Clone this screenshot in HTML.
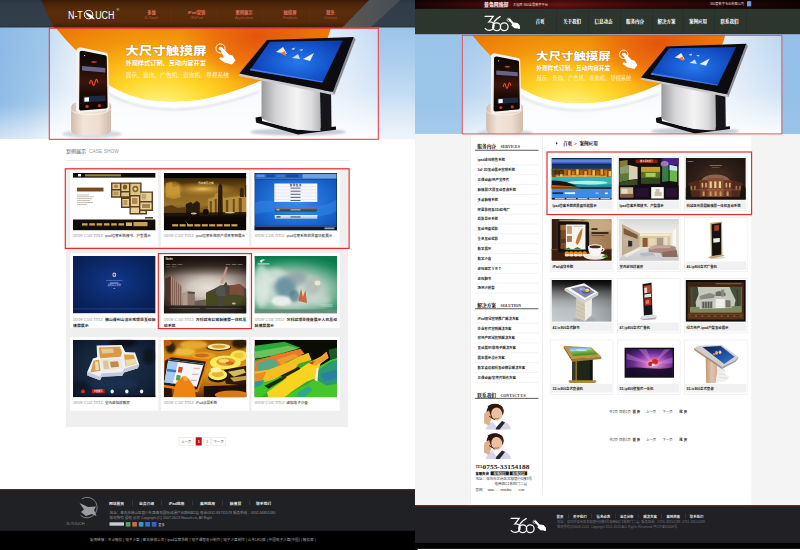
<!DOCTYPE html>
<html lang="zh-CN"><head><meta charset="utf-8"><title>N-Touch / 360 案例展示</title>
<style>
html,body{margin:0;padding:0;width:800px;height:550px;overflow:hidden;background:#fff}
svg{display:block;position:absolute;left:0;top:0}
text{white-space:pre}
</style></head><body>
<svg width="800" height="550" viewBox="0 0 800 550">
<defs>
<filter id="b1" x="-20%" y="-20%" width="140%" height="140%"><feGaussianBlur stdDeviation="1"/></filter>
<filter id="b2" x="-20%" y="-20%" width="140%" height="140%"><feGaussianBlur stdDeviation="2"/></filter>
<filter id="b3" x="-30%" y="-30%" width="160%" height="160%"><feGaussianBlur stdDeviation="3.5"/></filter>
<filter id="b5" x="-30%" y="-30%" width="160%" height="160%"><feGaussianBlur stdDeviation="6"/></filter>
<filter id="bh" x="-20%" y="-20%" width="140%" height="140%"><feGaussianBlur stdDeviation="0.5"/></filter>
<linearGradient id="bnL" x1="0" y1="0" x2="0" y2="1" gradientUnits="objectBoundingBox"><stop offset="0" stop-color="#b4d2ef"/><stop offset="1" stop-color="#e6eff9"/></linearGradient>
<linearGradient id="bnLh" x1="0" y1="0" x2="1" y2="0" gradientUnits="objectBoundingBox"><stop offset="0" stop-color="#b9d5f0" stop-opacity="1"/><stop offset="1" stop-color="#c9def3" stop-opacity="0"/></linearGradient>
<linearGradient id="bnRh" x1="0" y1="0" x2="1" y2="0" gradientUnits="objectBoundingBox"><stop offset="0" stop-color="#bcd6f1" stop-opacity="0"/><stop offset="1" stop-color="#bcd6f1" stop-opacity="1"/></linearGradient>
<linearGradient id="bnFade" x1="0" y1="0" x2="0" y2="1" gradientUnits="objectBoundingBox"><stop offset="0" stop-color="#ffffff" stop-opacity="0"/><stop offset="0.55" stop-color="#ffffff" stop-opacity="0.3"/><stop offset="1" stop-color="#ffffff" stop-opacity="1"/></linearGradient>
<radialGradient id="blobG" cx="160" cy="117" r="108" gradientUnits="userSpaceOnUse" gradientTransform="translate(160 117) scale(1.45 1) translate(-160 -117)"><stop offset="0" stop-color="#fff6b0"/><stop offset="0.2" stop-color="#ffea62"/><stop offset="0.38" stop-color="#ffd528"/><stop offset="0.55" stop-color="#fcb816"/><stop offset="0.72" stop-color="#f4960c"/><stop offset="1" stop-color="#ec7a06"/></radialGradient>
<radialGradient id="blobRed" cx="258" cy="36" r="60" gradientUnits="userSpaceOnUse" gradientTransform="translate(258 36) scale(1.3 0.8) translate(-258 -36)"><stop offset="0" stop-color="#e4520e" stop-opacity="0.95"/><stop offset="0.55" stop-color="#e8600c" stop-opacity="0.6"/><stop offset="1" stop-color="#ec6c0c" stop-opacity="0"/></radialGradient>
<linearGradient id="standG" x1="0" y1="0" x2="1" y2="0" gradientUnits="objectBoundingBox"><stop offset="0" stop-color="#d2bcac"/><stop offset="0.3" stop-color="#f2e4d8"/><stop offset="0.7" stop-color="#eedccf"/><stop offset="1" stop-color="#d0baaa"/></linearGradient>
<linearGradient id="kbodyG" x1="0" y1="0" x2="1" y2="0" gradientUnits="objectBoundingBox"><stop offset="0" stop-color="#9a9a9c"/><stop offset="0.25" stop-color="#d4d4d6"/><stop offset="0.6" stop-color="#f4f4f5"/><stop offset="0.85" stop-color="#dcdcde"/><stop offset="1" stop-color="#b4b4b6"/></linearGradient>
<radialGradient id="kscrG" cx="298" cy="62" r="48" gradientUnits="userSpaceOnUse" gradientTransform="translate(298 62) scale(1.3 0.7) translate(-298 -62)"><stop offset="0" stop-color="#2878ea"/><stop offset="0.45" stop-color="#1658d0"/><stop offset="1" stop-color="#0a32a0"/></radialGradient>
<linearGradient id="phoneScr" x1="0" y1="0" x2="0" y2="1" gradientUnits="objectBoundingBox"><stop offset="0" stop-color="#0c0806"/><stop offset="0.3" stop-color="#1e0e0a"/><stop offset="0.52" stop-color="#3c160c"/><stop offset="0.72" stop-color="#1c0a06"/><stop offset="1" stop-color="#0c0605"/></linearGradient>
<clipPath id="blobC"><path d="M55,27 L66,40 L77,51.5 C86,64 96,78 108,85 C113,88 119,91 125,93.75 C133,96.6 141,98.8 150,100.6 C158,101.8 164,102 170,102 C178,102 192,101 200,100 C212,97.6 222,95.6 230,93.75 C238,91.6 245,88 250,85.6 L260,81 L300,72 C318,58 328,42 331,27 Z"/></clipPath>
<g id="bn"><rect x="40" y="27" width="352" height="113" fill="#f3f7fc"/><rect x="40" y="27" width="60" height="113" fill="url(#bnLh)"/><rect x="300" y="27" width="92" height="113" fill="url(#bnRh)"/><rect x="40" y="27" width="352" height="113" fill="url(#bnFade)"/><g clip-path="url(#blobC)"><rect x="40" y="27" width="352" height="113" fill="url(#blobG)"/><rect x="40" y="27" width="352" height="113" fill="url(#blobRed)"/></g><path d="M108,85 C120,92 135,98 150,100.6 C165,102.6 185,102 200,100 C220,96 240,90 260,81 L262,88 C245,97 222,104 200,107 C180,109 160,109 145,107 C130,104 115,97 108,91 Z" fill="#ffffff" opacity="0.95"/><path d="M106,92 C120,102 145,108.6 170,109.4 C195,110 225,104 258,92" fill="none" stroke="#b8c4d4" stroke-width="1.6" opacity="0.55" filter="url(#b1)"/><ellipse cx="92" cy="134" rx="30" ry="4" fill="#b9c2cf" opacity="0.6" filter="url(#b1)"/><path d="M71.2,108 C71.2,104 74,102.6 78,102.6 L106,102 C109.6,102 111,103.6 111,106.6 L111,129 C111,134 106,135.6 91,135.6 C76,135.6 71.2,134 71.2,129 Z" fill="url(#standG)"/><path d="M81,47.5 L105.4,52.4 C107.2,52.8 108,53.8 108,55.6 L109.4,107.4 C109.4,109.4 108.4,110.4 106.6,110.6 L79.4,113 C77.4,113.1 76.2,112 76.1,110 L76.4,50.6 C76.4,48.4 78.4,47 81,47.5 Z" fill="#f6f3ee"/><path d="M82.6,50.8 L105,55.2 C106.2,55.4 106.8,56.2 106.8,57.4 L107.6,106.4 C107.6,107.6 107,108.3 105.8,108.4 L81.2,110.6 C79.8,110.7 79.1,110 79.1,108.6 L79.6,53 C79.6,51.4 80.8,50.5 82.6,50.8 Z" fill="url(#phoneScr)"/><path d="M82,66 L105.4,68 L105.4,72.4 L82,70.6 Z" fill="#8a86c0" opacity="0.7"/><path d="M83.2,96.4 L105.4,95.4 L105.5,101 L83.2,102.4 Z" fill="#1e2a44"/><path d="M84.4,97.4 L89,97.2 L89,101.4 L84.4,101.7 Z" fill="#fff"/><path d="M89.6,84 q1.2,-7 2.8,-1 q1.4,5.4 2.8,-1 q1.4,-5.6 2.6,0.6" fill="none" stroke="#ff4a28" stroke-width="1.1"/><ellipse cx="94" cy="62" rx="3" ry="0.8" fill="#e8502a"/><circle cx="84.6" cy="55.6" r="0.7" fill="#e8d8c8"/><circle cx="87" cy="106.4" r="1.7" fill="#b04418"/><circle cx="99.4" cy="105.6" r="1.7" fill="#b04418"/><path d="M71.2,110 C74,113.6 82,114.6 91,114.4 C100,114.2 108,112.6 111,108.6 L111,129 C111,134 106,135.6 91,135.6 C76,135.6 71.2,134 71.2,129 Z" fill="url(#standG)"/><path d="M71.2,110 C74,113.6 82,114.6 91,114.4 C100,114.2 108,112.6 111,108.6" fill="none" stroke="#fff8f0" stroke-width="0.8" opacity="0.9"/><ellipse cx="298" cy="132" rx="48" ry="3.6" fill="#8d97a8" opacity="0.5" filter="url(#b1)"/><path d="M255.5,117.6 L262,116.4 L262,121 L298,130 L336,126.6 L336,129.8 L298,134.6 L256,122.6 Z" fill="#0e0e12"/><path d="M320,90 L331,88 L331.5,128.4 L320.5,131 Z" fill="#15151a"/><path d="M261.5,78 L320,91.5 L320.5,131 C300,131.6 278,126.6 261.5,118.6 Z" fill="url(#kbodyG)"/><path d="M239.3,73.6 L333,92 L334.2,95.2 L239,76 Z" fill="#c9c9cf"/><path d="M353.8,37 L355.5,39.5 L334.2,95.2 L333,92 Z" fill="#8a8a92"/><path d="M267,40 L353.8,37 L333,92 L239.3,73.6 Z" fill="#0c0c10"/><path d="M269.7,41.8 L342.8,40.6 L322.5,82.4 L249.8,70.3 Z" fill="url(#kscrG)"/><path d="M276,52 l7,-5 l4,7 z" fill="#fff" opacity="0.9"/><path d="M280,53 l5,-2 l1,5 z" fill="#e8802a"/><path d="M292,58 l6,-4 l2,5 z" fill="#e8f4ff" opacity="0.85"/><path d="M303,59 l11,-6 l-4,8 z" fill="#fff" opacity="0.9"/><path d="M291,49 l4,-1.5 l-1,2.5 z M299,50 l4,-1 l-1,2 z" fill="#fff" opacity="0.8"/><path d="M250.6,68.6 L322.9,81.6 L322.5,82.4 L249.8,70.3 Z" fill="#5a8ae8" opacity="0.8"/><circle cx="220.5" cy="48.5" r="4.6" fill="none" stroke="#fff" stroke-width="1"/><circle cx="220.5" cy="48.5" r="1.8" fill="#fff"/><path d="M219.5,48 L222,47.2 L229,54.5 L232.5,55.5 L235.5,60.5 L232,64.5 L224.5,62.5 L219,58.8 L220.5,57.2 L224,57.8 Z" fill="#fff"/></g>
<linearGradient id="Lblue" x1="0" y1="0" x2="0" y2="1" gradientUnits="objectBoundingBox"><stop offset="0" stop-color="#9bc4e9"/><stop offset="0.6" stop-color="#a6cbed"/><stop offset="1" stop-color="#d3e4f5"/></linearGradient>
<linearGradient id="Lbrown" x1="0" y1="0" x2="0" y2="1" gradientUnits="objectBoundingBox"><stop offset="0" stop-color="#3a1a05"/><stop offset="0.12" stop-color="#4a2408"/><stop offset="0.4" stop-color="#5a2d0b"/><stop offset="0.8" stop-color="#562a0a"/><stop offset="1" stop-color="#3e1e07"/></linearGradient>
<linearGradient id="LblueH" x1="0" y1="0" x2="1" y2="0" gradientUnits="objectBoundingBox"><stop offset="0" stop-color="#86b6e4" stop-opacity="0.75"/><stop offset="0.6" stop-color="#8fbce6" stop-opacity="0.45"/><stop offset="1" stop-color="#a0c6ea" stop-opacity="0"/></linearGradient>
<linearGradient id="LblueV" x1="0" y1="0" x2="0" y2="1" gradientUnits="objectBoundingBox"><stop offset="0" stop-color="#fff" stop-opacity="0"/><stop offset="0.7" stop-color="#fff" stop-opacity="0"/><stop offset="1" stop-color="#fff" stop-opacity="0.55"/></linearGradient>
<linearGradient id="LblueR" x1="0" y1="0" x2="0" y2="1" gradientUnits="objectBoundingBox"><stop offset="0" stop-color="#fff" stop-opacity="0"/><stop offset="0.3" stop-color="#fff" stop-opacity="0.12"/><stop offset="1" stop-color="#fff" stop-opacity="0.62"/></linearGradient>
<linearGradient id="Lhdr" x1="0" y1="0" x2="0" y2="1" gradientUnits="objectBoundingBox"><stop offset="0" stop-color="#2a3541"/><stop offset="0.15" stop-color="#313d49"/><stop offset="0.9" stop-color="#323e4a"/><stop offset="1" stop-color="#2a3440"/></linearGradient>
<linearGradient id="Lband" x1="0" y1="0" x2="1" y2="0" gradientUnits="objectBoundingBox"><stop offset="0" stop-color="#5e5751"/><stop offset="1" stop-color="#444e58"/></linearGradient>
<clipPath id="LbC"><rect x="49" y="28" width="329.5" height="111.5"/></clipPath>
<clipPath id="tLc"><rect x="0" y="0" width="82.6" height="57.4"/></clipPath>
<linearGradient id="l2sky" x1="0" y1="0" x2="0" y2="1" gradientUnits="objectBoundingBox"><stop offset="0" stop-color="#060403"/><stop offset="0.082" stop-color="#060403"/><stop offset="0.09" stop-color="#3a2408"/><stop offset="0.25" stop-color="#6c4a14"/><stop offset="0.38" stop-color="#8e6822"/><stop offset="0.55" stop-color="#9a7228"/><stop offset="0.7" stop-color="#6a4a18"/><stop offset="0.755" stop-color="#1a1208"/><stop offset="0.77" stop-color="#0a0705"/><stop offset="1" stop-color="#0a0705"/></linearGradient>
<radialGradient id="l2glow" cx="0.47" cy="0.3" r="0.3" gradientUnits="objectBoundingBox" gradientTransform="translate(.47 .3) scale(1.4 0.6) translate(-.47 -.3)"><stop offset="0" stop-color="#f0c860" stop-opacity="0.95"/><stop offset="0.5" stop-color="#d09a38" stop-opacity="0.5"/><stop offset="1" stop-color="#c89838" stop-opacity="0"/></radialGradient>
<radialGradient id="l3bg" cx="0.5" cy="0.5" r="0.75" gradientUnits="objectBoundingBox"><stop offset="0" stop-color="#3a8eea"/><stop offset="0.55" stop-color="#1a68d0"/><stop offset="1" stop-color="#0c46a4"/></radialGradient>
<radialGradient id="l4bg" cx="0.5" cy="0.45" r="0.75" gradientUnits="objectBoundingBox"><stop offset="0" stop-color="#12388a"/><stop offset="0.5" stop-color="#0b2868"/><stop offset="1" stop-color="#08194a"/></radialGradient>
<radialGradient id="l5sky" cx="0.54" cy="0.56" r="0.62" gradientUnits="objectBoundingBox" gradientTransform="translate(.54 .56) scale(1.25 0.85) translate(-.54 -.56)"><stop offset="0" stop-color="#e8e0d8"/><stop offset="0.3" stop-color="#d0c6bc"/><stop offset="0.6" stop-color="#8c7c72"/><stop offset="0.85" stop-color="#4a3c34"/><stop offset="1" stop-color="#2a201c"/></radialGradient>
<linearGradient id="l5top" x1="0" y1="0" x2="0" y2="1" gradientUnits="objectBoundingBox"><stop offset="0" stop-color="#120e0c" stop-opacity="0.95"/><stop offset="0.5" stop-color="#241c18" stop-opacity="0.75"/><stop offset="1" stop-color="#3a2e28" stop-opacity="0"/></linearGradient>
<radialGradient id="l5vig" cx="0.5" cy="0.5" r="0.72" gradientUnits="objectBoundingBox"><stop offset="0" stop-color="#000" stop-opacity="0"/><stop offset="0.7" stop-color="#000" stop-opacity="0"/><stop offset="1" stop-color="#1a0c08" stop-opacity="0.7"/></radialGradient>
<radialGradient id="l6bg" cx="0.45" cy="0.6" r="0.72" gradientUnits="objectBoundingBox" gradientTransform="translate(.45 .6) scale(1.2 0.86) translate(-.45 -.6)"><stop offset="0" stop-color="#d6e2da"/><stop offset="0.42" stop-color="#bcd2c6"/><stop offset="0.66" stop-color="#62aa8a"/><stop offset="0.86" stop-color="#1c8a5c"/><stop offset="1" stop-color="#0e7a4c"/></radialGradient>
<radialGradient id="l7bg" cx="0.5" cy="0.5" r="0.75" gradientUnits="objectBoundingBox"><stop offset="0" stop-color="#1e3450"/><stop offset="0.6" stop-color="#14243a"/><stop offset="1" stop-color="#0c1626"/></radialGradient>
<linearGradient id="l8bg" x1="0" y1="0" x2="0" y2="1" gradientUnits="objectBoundingBox"><stop offset="0" stop-color="#8a4a0c"/><stop offset="0.2" stop-color="#d08414"/><stop offset="0.55" stop-color="#e09818"/><stop offset="0.8" stop-color="#b06a10"/><stop offset="1" stop-color="#5a2c08"/></linearGradient>
<linearGradient id="Rblue" x1="0" y1="0" x2="0" y2="1" gradientUnits="objectBoundingBox"><stop offset="0" stop-color="#9bc4ea"/><stop offset="0.7" stop-color="#9cc5ea"/><stop offset="1" stop-color="#a6caec"/></linearGradient>
<linearGradient id="Rtop" x1="0" y1="0" x2="1" y2="0" gradientUnits="objectBoundingBox"><stop offset="0" stop-color="#1a0404"/><stop offset="0.2" stop-color="#4a0c0c"/><stop offset="0.38" stop-color="#6a1212"/><stop offset="0.6" stop-color="#3c0808"/><stop offset="1" stop-color="#120303"/></linearGradient>
<linearGradient id="RtopV" x1="0" y1="0" x2="0" y2="1" gradientUnits="objectBoundingBox"><stop offset="0" stop-color="#000" stop-opacity="0.45"/><stop offset="0.5" stop-color="#000" stop-opacity="0"/><stop offset="1" stop-color="#000" stop-opacity="0.35"/></linearGradient>
<clipPath id="RbC"><rect x="462" y="35" width="320" height="99.3"/></clipPath>
<linearGradient id="RbnL" x1="0" y1="0" x2="0" y2="1" gradientUnits="objectBoundingBox"><stop offset="0" stop-color="#9cc4ea" stop-opacity="0.8"/><stop offset="0.6" stop-color="#a4c9ec" stop-opacity="0.55"/><stop offset="1" stop-color="#b4d2ef" stop-opacity="0.25"/></linearGradient>
<clipPath id="tRc"><rect x="0" y="0" width="60.2" height="41.8"/></clipPath>
<linearGradient id="r1sky" x1="0" y1="0" x2="0" y2="1" gradientUnits="objectBoundingBox"><stop offset="0" stop-color="#10285e"/><stop offset="0.5" stop-color="#163468"/><stop offset="1" stop-color="#2a3c5c"/></linearGradient>
<radialGradient id="r3bg" cx="0.5" cy="0.5" r="0.7" gradientUnits="objectBoundingBox"><stop offset="0" stop-color="#4e3220"/><stop offset="0.5" stop-color="#2e1e18"/><stop offset="1" stop-color="#1c120e"/></radialGradient>
<linearGradient id="r4bg" x1="0" y1="0" x2="1" y2="0" gradientUnits="objectBoundingBox"><stop offset="0" stop-color="#2c1a10"/><stop offset="0.35" stop-color="#5a3c24"/><stop offset="0.6" stop-color="#b08c64"/><stop offset="1" stop-color="#a07850"/></linearGradient>
<linearGradient id="r5c" x1="0" y1="0" x2="0" y2="1" gradientUnits="objectBoundingBox"><stop offset="0" stop-color="#d4d6da"/><stop offset="1" stop-color="#f2f0ec"/></linearGradient>
<linearGradient id="r5f" x1="0" y1="0" x2="0" y2="1" gradientUnits="objectBoundingBox"><stop offset="0" stop-color="#e4e0d8"/><stop offset="1" stop-color="#c8c8cc"/></linearGradient>
<linearGradient id="r7bg" x1="0" y1="0" x2="0" y2="1" gradientUnits="objectBoundingBox"><stop offset="0" stop-color="#050505"/><stop offset="0.1" stop-color="#1a1a1a"/><stop offset="0.3" stop-color="#6c6c6c"/><stop offset="0.5" stop-color="#a2a6a8"/><stop offset="0.7" stop-color="#bac0c4"/><stop offset="1" stop-color="#c4cacd"/></linearGradient>
<linearGradient id="r7bgh" x1="0" y1="0" x2="1" y2="0" gradientUnits="objectBoundingBox"><stop offset="0" stop-color="#fff" stop-opacity="0.06"/><stop offset="0.5" stop-color="#000" stop-opacity="0"/><stop offset="1" stop-color="#000" stop-opacity="0.22"/></linearGradient>
<linearGradient id="r10s" x1="0" y1="0" x2="0.25" y2="1" gradientUnits="objectBoundingBox"><stop offset="0" stop-color="#4a8ee0"/><stop offset="0.4" stop-color="#a8d4f4"/><stop offset="0.55" stop-color="#7abc48"/><stop offset="1" stop-color="#3a8a24"/></linearGradient>
<radialGradient id="r11s" cx="0.58" cy="0.55" r="0.7" gradientUnits="objectBoundingBox"><stop offset="0" stop-color="#f4c8e8"/><stop offset="0.25" stop-color="#c86ac0"/><stop offset="0.6" stop-color="#6a2c94"/><stop offset="1" stop-color="#2c1448"/></radialGradient>
<linearGradient id="r12p" x1="0" y1="0" x2="1" y2="0" gradientUnits="objectBoundingBox"><stop offset="0" stop-color="#c09878"/><stop offset="0.5" stop-color="#e0c4ac"/><stop offset="1" stop-color="#d0b09a"/></linearGradient>
<linearGradient id="r12s" x1="0" y1="0" x2="1" y2="1" gradientUnits="objectBoundingBox"><stop offset="0" stop-color="#0c1c44"/><stop offset="0.5" stop-color="#1c4a9c"/><stop offset="1" stop-color="#3a7ad0"/></linearGradient>
</defs>
<rect x="0" y="0" width="415" height="550" fill="#ffffff" />
<rect x="0" y="27" width="415" height="111.6" fill="url(#Lblue)" />
<rect x="0" y="27" width="49" height="111.6" fill="url(#LblueH)" />
<rect x="0" y="27" width="49" height="111.6" fill="url(#LblueV)" />
<rect x="378" y="27" width="37" height="111.6" fill="url(#LblueR)" />
<rect x="0" y="0" width="415" height="27.5" fill="url(#Lhdr)" />
<path d="M369,0 L400.5,0 L370.5,27.5 L342.3,27.5 Z" fill="url(#Lband)"/>
<path d="M41,0 L369,0 L342.3,27.5 L54.2,27.5 C49,18 44.5,8 41,0 Z" fill="url(#Lbrown)"/>
<g clip-path="url(#LbC)"><use href="#bn"/></g>
<g transform="">
<text transform="translate(125.2 54.9) scale(0.29 0.25)" font-size="46.8" fill="#fff" font-weight="900" font-family='"Liberation Sans","Noto Sans CJK SC",sans-serif' text-anchor="start" style="text-shadow:0 0 1px #b05000" stroke="#c86000" stroke-width="0.6" paint-order="stroke">大尺寸触摸屏</text>
<text transform="translate(125.5 65.3) scale(0.25 0.25)" font-size="24.8" fill="#fff" font-weight="700" font-family='"Liberation Sans","Noto Sans CJK SC",sans-serif' text-anchor="start" stroke="#b86a10" stroke-width="0.5" paint-order="stroke">外观样式订制、互动内容开发</text>
<text transform="translate(125.5 76.6) scale(0.25 0.25)" font-size="23.0" fill="#fff6dc" font-weight="400" font-family='"Liberation Sans","Noto Sans CJK SC",sans-serif' text-anchor="start" opacity="0.92">展示、查询、广告机、查询机、导视系统</text>
</g>
<rect x="49.3" y="28.3" width="329" height="111" fill="none" stroke="#e6343a" stroke-width="1.0"/>
<text transform="translate(68 18.6) scale(0.21 0.25)" font-size="42.4" fill="#fff" font-weight="400" font-family='"Liberation Sans","Noto Sans CJK SC",sans-serif' text-anchor="start" >N-T</text>
<text transform="translate(95.2 18.6) scale(0.21 0.25)" font-size="42.4" fill="#fff" font-weight="400" font-family='"Liberation Sans","Noto Sans CJK SC",sans-serif' text-anchor="start" >UCH</text>
<circle cx="88.6" cy="14.6" r="4.3" fill="none" stroke="#fff" stroke-width="1"/><path d="M85.6,12.2 L91.6,15 L95,19.4 L90.2,18 L86.6,15 Z" fill="#fff"/>
<text transform="translate(116.6 11.4) scale(0.25 0.25)" font-size="15.2" fill="#fff" font-weight="400" font-family='"Liberation Sans","Noto Sans CJK SC",sans-serif' text-anchor="start" >®</text>
<text transform="translate(151.5 14.0) scale(0.25 0.25)" font-size="17.2" fill="#e2705c" font-weight="700" font-family='"Liberation Sans","Noto Sans CJK SC",sans-serif' text-anchor="middle" >多维</text>
<text transform="translate(151.5 19.1) scale(0.25 0.25)" font-size="14.8" fill="#b05a44" font-weight="400" font-family='"Liberation Sans","Noto Sans CJK SC",sans-serif' text-anchor="middle" font-style="italic" >N-Touch</text>
<text transform="translate(196.5 14.0) scale(0.25 0.25)" font-size="17.2" fill="#e2705c" font-weight="700" font-family='"Liberation Sans","Noto Sans CJK SC",sans-serif' text-anchor="middle" >iPad营销</text>
<text transform="translate(196.5 19.1) scale(0.25 0.25)" font-size="14.8" fill="#b05a44" font-weight="400" font-family='"Liberation Sans","Noto Sans CJK SC",sans-serif' text-anchor="middle" font-style="italic" >ISSPad</text>
<text transform="translate(244 14.0) scale(0.25 0.25)" font-size="17.2" fill="#e2705c" font-weight="700" font-family='"Liberation Sans","Noto Sans CJK SC",sans-serif' text-anchor="middle" >案例展示</text>
<text transform="translate(244 19.1) scale(0.25 0.25)" font-size="14.8" fill="#b05a44" font-weight="400" font-family='"Liberation Sans","Noto Sans CJK SC",sans-serif' text-anchor="middle" font-style="italic" >Application</text>
<text transform="translate(290 14.0) scale(0.25 0.25)" font-size="17.2" fill="#e2705c" font-weight="700" font-family='"Liberation Sans","Noto Sans CJK SC",sans-serif' text-anchor="middle" >触摸屏</text>
<text transform="translate(290 19.1) scale(0.25 0.25)" font-size="14.8" fill="#b05a44" font-weight="400" font-family='"Liberation Sans","Noto Sans CJK SC",sans-serif' text-anchor="middle" font-style="italic" >Products</text>
<text transform="translate(330.5 14.0) scale(0.25 0.25)" font-size="17.2" fill="#e2705c" font-weight="700" font-family='"Liberation Sans","Noto Sans CJK SC",sans-serif' text-anchor="middle" >联系</text>
<text transform="translate(330.5 19.1) scale(0.25 0.25)" font-size="14.8" fill="#b05a44" font-weight="400" font-family='"Liberation Sans","Noto Sans CJK SC",sans-serif' text-anchor="middle" font-style="italic" >Contact</text>
<rect x="171.5" y="7" width="0.5" height="15" fill="#6a3a18" opacity="0.6"/>
<rect x="217" y="7" width="0.5" height="15" fill="#6a3a18" opacity="0.6"/>
<rect x="262" y="7" width="0.5" height="15" fill="#6a3a18" opacity="0.6"/>
<rect x="309.5" y="7" width="0.5" height="15" fill="#6a3a18" opacity="0.6"/>
<text transform="translate(66 153.2) scale(0.25 0.25)" font-size="20" fill="#555" font-weight="400" font-family='"Liberation Sans","Noto Sans CJK SC",sans-serif' text-anchor="start" >案例展示</text>
<text transform="translate(89 153.2) scale(0.25 0.25)" font-size="19.6" fill="#9a9a9a" font-weight="400" font-family='"Liberation Sans","Noto Sans CJK SC",sans-serif' text-anchor="start" >CASE SHOW</text>
<rect x="66" y="160.2" width="283" height="0.6" fill="#dcdcdc" />
<rect x="66" y="167.5" width="282" height="259.5" fill="#efefef" />
<rect x="70.2" y="170.2" width="88" height="76.3" fill="#ffffff" />
<text transform="translate(73 237.4) scale(0.25 0.25)" font-size="14.48" fill="#8e8e8e" font-weight="400" font-family='"Liberation Serif","Noto Serif CJK SC",serif' text-anchor="start" font-style="italic" >SHOW CASE TITLE</text>
<text transform="translate(105 237.4) scale(0.25 0.25)" font-size="14.2" fill="#3a3a3a" font-weight="500" font-family='"Liberation Sans","Noto Sans CJK SC",sans-serif' text-anchor="start" >ipad答案系统楼书、户型展示</text>
<rect x="161.0" y="170.2" width="88" height="76.3" fill="#ffffff" />
<text transform="translate(163.8 237.4) scale(0.25 0.25)" font-size="14.48" fill="#8e8e8e" font-weight="400" font-family='"Liberation Serif","Noto Serif CJK SC",serif' text-anchor="start" font-style="italic" >SHOW CASE TITLE</text>
<text transform="translate(195.8 237.4) scale(0.25 0.25)" font-size="14.2" fill="#3a3a3a" font-weight="500" font-family='"Liberation Sans","Noto Sans CJK SC",sans-serif' text-anchor="start" >ipad答案系统房产项目案例展示</text>
<rect x="251.7" y="170.2" width="88" height="76.3" fill="#ffffff" />
<text transform="translate(254.5 237.4) scale(0.25 0.25)" font-size="14.48" fill="#8e8e8e" font-weight="400" font-family='"Liberation Serif","Noto Serif CJK SC",serif' text-anchor="start" font-style="italic" >SHOW CASE TITLE</text>
<text transform="translate(286.5 237.4) scale(0.25 0.25)" font-size="14.2" fill="#3a3a3a" font-weight="500" font-family='"Liberation Sans","Noto Sans CJK SC",sans-serif' text-anchor="start" >ipad答案系统的界面功能展示</text>
<rect x="70.2" y="253.2" width="88" height="74.8" fill="#ffffff" />
<text transform="translate(73 321.4) scale(0.25 0.25)" font-size="14.48" fill="#8e8e8e" font-weight="400" font-family='"Liberation Serif","Noto Serif CJK SC",serif' text-anchor="start" font-style="italic" >SHOW CASE TITLE</text>
<text transform="translate(105 321.4) scale(0.25 0.25)" font-size="15.6" fill="#2e2e2e" font-weight="700" font-family='"Liberation Sans","Noto Sans CJK SC",sans-serif' text-anchor="start" >佛山保利山清水秀项目互动触</text>
<text transform="translate(73 326.9) scale(0.25 0.25)" font-size="15.6" fill="#2e2e2e" font-weight="700" font-family='"Liberation Sans","Noto Sans CJK SC",sans-serif' text-anchor="start" >摸屏展示</text>
<rect x="161.0" y="253.2" width="88" height="74.8" fill="#ffffff" />
<text transform="translate(163.8 321.4) scale(0.25 0.25)" font-size="14.48" fill="#8e8e8e" font-weight="400" font-family='"Liberation Serif","Noto Serif CJK SC",serif' text-anchor="start" font-style="italic" >SHOW CASE TITLE</text>
<text transform="translate(195.8 321.4) scale(0.25 0.25)" font-size="15.6" fill="#2e2e2e" font-weight="700" font-family='"Liberation Sans","Noto Sans CJK SC",sans-serif' text-anchor="start" >万科城市公寓触摸屏一体机互</text>
<text transform="translate(163.8 326.9) scale(0.25 0.25)" font-size="15.6" fill="#2e2e2e" font-weight="700" font-family='"Liberation Sans","Noto Sans CJK SC",sans-serif' text-anchor="start" >动系统</text>
<rect x="251.7" y="253.2" width="88" height="74.8" fill="#ffffff" />
<text transform="translate(254.5 321.4) scale(0.25 0.25)" font-size="14.48" fill="#8e8e8e" font-weight="400" font-family='"Liberation Serif","Noto Serif CJK SC",serif' text-anchor="start" font-style="italic" >SHOW CASE TITLE</text>
<text transform="translate(286.5 321.4) scale(0.25 0.25)" font-size="15.6" fill="#2e2e2e" font-weight="700" font-family='"Liberation Sans","Noto Sans CJK SC",sans-serif' text-anchor="start" >万科城项目楼盘展示人机互动</text>
<text transform="translate(254.5 326.9) scale(0.25 0.25)" font-size="15.6" fill="#2e2e2e" font-weight="700" font-family='"Liberation Sans","Noto Sans CJK SC",sans-serif' text-anchor="start" >触摸屏展示</text>
<rect x="70.2" y="337.0" width="88" height="73.8" fill="#ffffff" />
<text transform="translate(73 404.2) scale(0.25 0.25)" font-size="14.48" fill="#8e8e8e" font-weight="400" font-family='"Liberation Serif","Noto Serif CJK SC",serif' text-anchor="start" font-style="italic" >SHOW CASE TITLE</text>
<text transform="translate(105 404.2) scale(0.25 0.25)" font-size="14.2" fill="#3a3a3a" font-weight="500" font-family='"Liberation Sans","Noto Sans CJK SC",sans-serif' text-anchor="start" >室内虚拟样板房</text>
<rect x="161.0" y="337.0" width="88" height="73.8" fill="#ffffff" />
<text transform="translate(163.8 404.2) scale(0.25 0.25)" font-size="14.48" fill="#8e8e8e" font-weight="400" font-family='"Liberation Serif","Noto Serif CJK SC",serif' text-anchor="start" font-style="italic" >SHOW CASE TITLE</text>
<text transform="translate(195.8 404.2) scale(0.25 0.25)" font-size="14.2" fill="#3a3a3a" font-weight="500" font-family='"Liberation Sans","Noto Sans CJK SC",sans-serif' text-anchor="start" >iPad点餐系统</text>
<rect x="251.7" y="337.0" width="88" height="73.8" fill="#ffffff" />
<text transform="translate(254.5 404.2) scale(0.25 0.25)" font-size="14.48" fill="#8e8e8e" font-weight="400" font-family='"Liberation Serif","Noto Serif CJK SC",serif' text-anchor="start" font-style="italic" >SHOW CASE TITLE</text>
<text transform="translate(286.5 404.2) scale(0.25 0.25)" font-size="14.2" fill="#3a3a3a" font-weight="500" font-family='"Liberation Sans","Noto Sans CJK SC",sans-serif' text-anchor="start" >虚拟电子沙盘</text>
<g transform="translate(73 173)" clip-path="url(#tLc)">
<rect x="0" y="0" width="82.6" height="57.4" fill="#ffffff" />
<rect x="0" y="0" width="82.6" height="4.6" fill="#120c08" />
<rect x="5" y="1" width="3" height="2.4" fill="#f8f8f0" />
<rect x="12" y="1.2" width="36" height="2.2" fill="#a07c3a" />
<rect x="0" y="46.5" width="82.6" height="10.9" fill="#130d08" />
<rect x="9.0" y="50.2" width="5.6" height="2.4" fill="#c9a04c" />
<rect x="16.3" y="50.2" width="5.6" height="2.4" fill="#c9a04c" />
<rect x="23.6" y="50.2" width="5.6" height="2.4" fill="#c9a04c" />
<rect x="30.9" y="50.2" width="5.6" height="2.4" fill="#c9a04c" />
<rect x="38.2" y="50.2" width="5.6" height="2.4" fill="#c9a04c" />
<rect x="45.5" y="50.2" width="5.6" height="2.4" fill="#c9a04c" />
<rect x="53" y="49.4" width="6" height="3.6" fill="#d8b45c" />
<rect x="60.5" y="49" width="14" height="4.2" fill="#c9a04c" />
<rect x="4" y="14.6" width="26.5" height="3.9" fill="#7a4a1c" />
<rect x="4" y="21.5" width="12" height="0.8" fill="#b8b0a4" />
<rect x="4" y="23.4" width="17" height="0.8" fill="#b8b0a4" />
<rect x="4" y="25.3" width="15" height="0.8" fill="#b8b0a4" />
<rect x="4" y="27.2" width="13" height="0.8" fill="#b8b0a4" />
<rect x="4" y="29.1" width="16" height="0.8" fill="#b8b0a4" />
<rect x="4" y="31.0" width="10" height="0.8" fill="#b8b0a4" />
<path d="M38,9.4 L68.6,9.4 L68.6,18.4 L80,18.4 L80,38 L74,38 L74,41.4 L56.5,41.4 L56.5,35 L48,35 L48,24.7 L38,24.7 Z" fill="#5c3e1c" />
<path d="M39.4,10.8 L47,10.8 L47,16 L39.4,16 Z M48.4,10.8 L56,10.8 L56,18 L48.4,18 Z M57.4,10.8 L67.2,10.8 L67.2,22 L57.4,22 Z M39.4,17.4 L47,17.4 L47,23.3 L39.4,23.3 Z M48.4,19.4 L56,19.4 L56,23.3 L48.4,23.3 Z" fill="#dcc48c" />
<path d="M49.4,26 L56,26 L56,33.6 L49.4,33.6 Z M57.8,23.4 L66,23.4 L66,33 L57.8,33 Z M57.8,34.4 L66,34.4 L66,40 L57.8,40 Z M67.4,19.8 L78.6,19.8 L78.6,28 L67.4,28 Z M67.4,29.4 L78.6,29.4 L78.6,36.6 L67.4,36.6 Z M67.4,38 L72.6,38 L72.6,40 L67.4,40 Z" fill="#e6d09c" />
<ellipse cx="62.4" cy="16" rx="3" ry="3.2" fill="#8a6428" />
<ellipse cx="62.4" cy="16" rx="1.4" ry="1.5" fill="#e8d8a8" />
<ellipse cx="52" cy="14" rx="2.2" ry="2.6" fill="#7a5624" />
<ellipse cx="43" cy="13.2" rx="2" ry="1.6" fill="#a88444" />
<rect x="59" y="25" width="5.4" height="6" fill="#b08a4c" />
<rect x="68.6" y="21" width="4.6" height="5.4" fill="#c8a868" />
<rect x="69" y="31" width="8" height="4" fill="#a8844c" />
<rect x="50.4" y="27" width="4" height="5" fill="#c09858" />
<rect x="40.4" y="18.6" width="5" height="3.6" fill="#b89454" />
<rect x="72" y="44" width="8" height="1.6" fill="#6a4418" />
</g>
<g transform="translate(163.8 173)" clip-path="url(#tLc)">
<rect x="0" y="0" width="82.6" height="57.4" fill="url(#l2sky)" />
<rect x="0" y="4.6" width="82.6" height="38" fill="url(#l2glow)" />
<ellipse cx="9" cy="16" rx="9" ry="7" fill="#c09030" opacity="0.75" filter="url(#b1)"/>
<path d="M2,10 L8,9 L9,14 L15,13 L17,24 L10,26 L2,24 Z" fill="#d8a840" opacity="0.55"/>
<path d="M44,26 L50,24 L52,20 L58,20 L60,25 L82.6,22 L82.6,41 L44,42 Z" fill="#b48c3c" />
<path d="M46,28 L48,28 L48,41 L46,41 Z M51,26 L53,26 L53,41 L51,41 Z M62,27 L64.5,27 L64.5,41 L62,41 Z M69,26 L71,26 L71,41 L69,41 Z M75,25 L78,25 L78,41 L75,41 Z" fill="#5a3c12" opacity="0.8"/>
<path d="M54.5,13 L56.5,10 L58.5,13 L59,42 L54,42 Z" fill="#2c1c08" />
<path d="M76,16 L78,14 L80,16 L80,24 L76,24 Z M81,12 L82.6,12 L82.6,24 L81,24 Z" fill="#3a2610" />
<path d="M22,31 L27,29 L29,31 L33,28 L36,30 L36,43 L22,43 Z" fill="#2a1a08" />
<path d="M0,34 L8,32 L14,35 L22,34 L22,43 L0,43 Z" fill="#5a3c14" />
<path d="M36,36 L44,33 L44,43 L36,43 Z" fill="#7a5a20" />
<ellipse cx="42" cy="39" rx="3" ry="3" fill="#140c04" />
<path d="M0,40 L82.6,39 L82.6,44 L0,44 Z" fill="#140c06" opacity="0.85"/>
<ellipse cx="30" cy="40.5" rx="3" ry="1" fill="#f0e8d0" opacity="0.8"/>
<ellipse cx="66" cy="39.6" rx="5" ry="0.9" fill="#f0e0b0" opacity="0.8"/>
<rect x="8.4" y="51.2" width="6" height="2.2" fill="#d0a848" />
<rect x="15.8" y="51.2" width="6" height="2.2" fill="#d0a848" />
<rect x="23.200000000000003" y="51.2" width="6" height="2.2" fill="#d0a848" />
<rect x="30.6" y="51.2" width="6" height="2.2" fill="#d0a848" />
<rect x="38.0" y="51.2" width="6" height="2.2" fill="#d0a848" />
<rect x="45.4" y="51.2" width="6" height="2.2" fill="#d0a848" />
<rect x="52.800000000000004" y="51.2" width="6" height="2.2" fill="#d0a848" />
<rect x="60.2" y="51.2" width="6" height="2.2" fill="#d0a848" />
<rect x="67.60000000000001" y="51.2" width="6" height="2.2" fill="#d0a848" />
<path d="M21,47.6 L25,51.4 L24.4,51.8 Z" fill="#d8d0b0" />
<text transform="translate(42 11.4) scale(0.25 0.25)" font-size="10.4" fill="#f0dca0" font-weight="700" font-family='"Liberation Sans","Noto Sans CJK SC",sans-serif' text-anchor="middle" >万科尊荣之城</text>
</g>
<g transform="translate(254.5 173)" clip-path="url(#tLc)">
<rect x="0" y="0" width="82.6" height="57.4" fill="url(#l3bg)" />
<path d="M0,30 C20,20 60,44 82.6,26 L82.6,38 C60,52 20,32 0,42 Z" fill="#3288e4" opacity="0.5"/>
<rect x="0" y="0.6" width="82.6" height="5.2" fill="#6aa2e4" />
<rect x="0" y="0.8" width="48" height="4.6" fill="#2a66c0" />
<rect x="2" y="1.6" width="8" height="2.6" fill="#5a92dc" />
<rect x="12" y="1.6" width="8" height="2.6" fill="#16489c" />
<rect x="22" y="1.6" width="8" height="2.6" fill="#3a7ad0" />
<rect x="32" y="1.6" width="12" height="2.6" fill="#16489c" />
<rect x="0" y="5.8" width="82.6" height="0.8" fill="#16408c" />
<rect x="19.8" y="10.5" width="43" height="18.4" fill="#f6f8fc" />
<rect x="19.8" y="13.6" width="43" height="0.4" fill="#ccd4e4" />
<rect x="19.8" y="16.7" width="43" height="0.4" fill="#ccd4e4" />
<rect x="19.8" y="19.8" width="43" height="0.4" fill="#ccd4e4" />
<rect x="19.8" y="22.9" width="43" height="0.4" fill="#ccd4e4" />
<rect x="19.8" y="26.0" width="43" height="0.4" fill="#ccd4e4" />
<rect x="36" y="14.6" width="10" height="1" fill="#5a6478" />
<rect x="36" y="17.7" width="10" height="1" fill="#5a6478" />
<rect x="36" y="20.8" width="10" height="1" fill="#5a6478" />
<rect x="36" y="23.9" width="10" height="1" fill="#5a6478" />
<rect x="36" y="27.0" width="10" height="1" fill="#5a6478" />
<text transform="translate(41 13.2) scale(0.25 0.25)" font-size="9.6" fill="#223" font-weight="700" font-family='"Liberation Sans","Noto Sans CJK SC",sans-serif' text-anchor="middle" >登 录 信 息</text>
<rect x="20.3" y="35.1" width="42" height="3.6" fill="#3e4854" />
<rect x="20.3" y="35.1" width="42" height="1.2" fill="#6a7684" />
<rect x="22" y="36.2" width="3" height="1.2" fill="#c8d0d8" />
<rect x="36" y="36.2" width="10" height="1.2" fill="#aab4c0" />
<rect x="20.3" y="42.1" width="42.5" height="3.6" fill="#c6ced8" />
<rect x="20.3" y="42.1" width="42.5" height="1.3" fill="#eef2f6" />
<rect x="22" y="43.2" width="4" height="1.3" fill="#3a4450" />
<rect x="36" y="43.4" width="10" height="1.1" fill="#4a5460" />
<rect x="0" y="52.8" width="82.6" height="4.6" fill="#0c1634" />
<rect x="0" y="52.8" width="82.6" height="1" fill="#4a5c84" />
<rect x="70" y="54.4" width="10" height="1.8" fill="#8a9cc0" />
<rect x="0" y="0" width="82.6" height="0.6" fill="#0a1430" />
<rect x="0" y="0" width="0.6" height="57.4" fill="#0a1a44" />
<rect x="82" y="0" width="0.6" height="57.4" fill="#0a1a44" />
</g>
<g transform="translate(73 256)" clip-path="url(#tLc)">
<rect x="0" y="0" width="82.6" height="57.4" fill="url(#l4bg)" />
<ellipse cx="41.3" cy="18.8" rx="1.9" ry="2.2" fill="#c4cee6" />
<ellipse cx="41.3" cy="18.8" rx="1" ry="1.2" fill="#6a4a6a" />
<rect x="33" y="24.2" width="16.6" height="0.5" fill="#7a94d0" />
<rect x="37" y="26.6" width="8.6" height="0.9" fill="#b8c8ec" />
<rect x="40.4" y="32" width="1.8" height="0.8" fill="#8aa0d8" />
<rect x="0" y="52.6" width="82.6" height="0.7" fill="#4a6ab8" opacity="0.6"/>
<text transform="translate(41.3 30) scale(0.25 0.25)" font-size="8.8" fill="#c8d4f0" font-weight="400" font-family='"Liberation Sans","Noto Sans CJK SC",sans-serif' text-anchor="middle" >保利山清水秀</text>
</g>
<g transform="translate(163.8 256)" clip-path="url(#tLc)">
<rect x="0" y="0" width="82.6" height="57.4" fill="url(#l5sky)" />
<rect x="0" y="0" width="82.6" height="20" fill="url(#l5top)" />
<path d="M56.4,27 L62.2,10.6 L64,11.2 L59.3,27.7 Z" fill="#c89888" opacity="0.9"/>
<path d="M1.2,22.4 L7,19.5 L18,30.7 L18,49.5 L1.2,49.5 Z" fill="#a88878" />
<path d="M1.2,22.4 L7,19.5 L7,49.5 L1.2,49.5 Z" fill="#4a3228" />
<path d="M8.4,21 L9.2,21.8 L9.2,49.5 L8.4,49.5 Z" fill="#6a4c40" opacity="0.8"/>
<path d="M10.4,23 L11.2,23.8 L11.2,49.5 L10.4,49.5 Z" fill="#6a4c40" opacity="0.8"/>
<path d="M12.4,25 L13.2,25.8 L13.2,49.5 L12.4,49.5 Z" fill="#6a4c40" opacity="0.8"/>
<path d="M14.4,27 L15.2,27.8 L15.2,49.5 L14.4,49.5 Z" fill="#6a4c40" opacity="0.8"/>
<path d="M16.4,29 L17.2,29.8 L17.2,49.5 L16.4,49.5 Z" fill="#6a4c40" opacity="0.8"/>
<path d="M18.6,37.7 L23.8,35.4 L30.8,36 L31.4,49.5 L18.6,49.5 Z" fill="#8a766a" />
<path d="M23.8,35.4 L30.8,36 L31,38 L23.8,37.4 Z" fill="#5a4a42" />
<path d="M18.6,37.7 L23.8,35.4 L23.8,49.5 L18.6,49.5 Z" fill="#b09c8e" />
<path d="M31,45 L42,43.6 L42,49.5 L31,49.5 Z" fill="#6a5c50" />
<path d="M42.4,36.5 L50,33 L56.4,29.5 L60,29 L61.4,26.4 L63,26.4 L63.6,29 L65.7,29.5 L76,28.3 L82.6,33 L82.6,49.5 L42.4,49.5 Z" fill="#4a443a" />
<path d="M65.7,29.5 L76,28.3 L80,31 L80,42 L66,42 Z" fill="#7e4c3a" />
<path d="M52,33.6 L56.4,29.5 L61,31 L62,40 L52,40 Z" fill="#54544e" />
<path d="M42.4,37.5 C45,34.5 50,35 53,38.6 L54,49.5 L42.4,49.5 Z" fill="#46481f" />
<path d="M60,42 C66,37 76,38 82.6,41 L82.6,49.5 L60,49.5 Z" fill="#484a22" />
<ellipse cx="70" cy="47.6" rx="2" ry="1" fill="#d8d0c0" opacity="0.8"/>
<rect x="0" y="49.5" width="82.6" height="7.9" fill="#2a2622" />
<rect x="6" y="52" width="30" height="0.8" fill="#5a544c" />
<rect x="42" y="52" width="36" height="0.8" fill="#5a544c" />
<rect x="0" y="0" width="82.6" height="57.4" fill="url(#l5vig)" />
<text transform="translate(1.6 4.2) scale(0.25 0.25)" font-size="10.4" fill="#e8e0d0" font-weight="700" font-family='"Liberation Sans","Noto Sans CJK SC",sans-serif' text-anchor="start" >Vanke</text>
<rect x="2" y="8" width="4.6" height="0.6" fill="#c8c0b0" opacity="0.7"/>
<rect x="8" y="8" width="4.6" height="0.6" fill="#c8c0b0" opacity="0.7"/>
<rect x="14" y="8" width="4.6" height="0.6" fill="#c8c0b0" opacity="0.7"/>
<rect x="2" y="10.6" width="4.6" height="0.6" fill="#a8a090" opacity="0.6"/>
<rect x="8" y="10.6" width="4.6" height="0.6" fill="#a8a090" opacity="0.6"/>
<rect x="62" y="8.4" width="4.6" height="0.6" fill="#c8c0b0" opacity="0.7"/>
<rect x="68" y="8.4" width="4.6" height="0.6" fill="#c8c0b0" opacity="0.7"/>
<rect x="74" y="8.4" width="4.6" height="0.6" fill="#c8c0b0" opacity="0.7"/>
</g>
<g transform="translate(254.5 256)" clip-path="url(#tLc)">
<rect x="0" y="0" width="82.6" height="57.4" fill="url(#l6bg)" />
<ellipse cx="7" cy="30" rx="8" ry="22" fill="#e4f0e8" opacity="0.7" filter="url(#b2)"/>
<ellipse cx="20" cy="20" rx="12" ry="8" fill="#dce8e0" opacity="0.7" filter="url(#b2)"/>
<ellipse cx="31" cy="31" rx="11" ry="11" fill="#5c8898" opacity="0.85" filter="url(#b2)"/>
<ellipse cx="43" cy="22" rx="10" ry="7" fill="#8a9ca0" opacity="0.75" filter="url(#b2)"/>
<ellipse cx="58" cy="30" rx="9" ry="9" fill="#b4bcb8" opacity="0.85" filter="url(#b2)"/>
<ellipse cx="66" cy="44" rx="10" ry="6" fill="#c8d8d0" opacity="0.7" filter="url(#b2)"/>
<path d="M44,45 L46.5,32 L48.4,41 L51,34 L52.5,47 Z" fill="#d0683a" filter="url(#bh)"/>
<ellipse cx="27" cy="45" rx="10" ry="5" fill="#f0f4f0" opacity="0.85" filter="url(#b1)"/>
<ellipse cx="40" cy="40" rx="5" ry="6" fill="#3a6a78" opacity="0.6" filter="url(#b1)"/>
<ellipse cx="63" cy="27" rx="3" ry="2.4" fill="#f0f0d0" opacity="0.85" filter="url(#bh)"/>
<rect x="0" y="53.4" width="82.6" height="4" fill="#6a8c7a" />
<rect x="0" y="0" width="82.6" height="2.4" fill="#0e7a4c" opacity="0.85"/>
<path d="M5,5 q3,-3 6,-1 q-3,0 -4,3 z" fill="#e8f4ec" />
<rect x="3" y="7.4" width="12" height="1" fill="#c8e4d4" />
<rect x="66" y="48.6" width="12" height="0.7" fill="#d8e8e0" opacity="0.8"/>
<rect x="68" y="50.4" width="10" height="0.6" fill="#c8dcd0" opacity="0.7"/>
</g>
<g transform="translate(73 339.8)" clip-path="url(#tLc)">
<rect x="0" y="0" width="82.6" height="57.4" fill="url(#l7bg)" />
<ellipse cx="50" cy="3" rx="14" ry="4" fill="#080e18" opacity="0.85" filter="url(#b1)"/>
<ellipse cx="76" cy="17" rx="6" ry="7" fill="#0a121c" opacity="0.85" filter="url(#b1)"/>
<ellipse cx="8" cy="46" rx="10" ry="4" fill="#0c1622" opacity="0.7" filter="url(#b1)"/>
<ellipse cx="40" cy="44" rx="26" ry="5" fill="#1c3252" opacity="0.8" filter="url(#b2)"/>
<path d="M23.6,5.8 L48.6,5.2 L52,12.2 L62,12.8 L66.3,25 L64.9,28.4 L51,32.6 L49.2,36 L28.8,37 L27,40.5 L14.3,35.6 L14.3,32 L20,18.6 L24.2,17.4 Z" fill="#eef0f6" />
<path d="M14.3,32 L27,37 L28.8,33.4 L49.2,32.4 L51,29 L64.9,24.8 L66.3,25 L64.9,28.4 L51,32.6 L49.2,36 L28.8,37 L27,40.5 L14.3,35.6 Z" fill="#c4c9d8" />
<path d="M25.8,7.6 L47,7 L49,13 L47.6,17 L27,18.4 Z" fill="#d89a48" />
<path d="M28,9 L40,8.6 L41,13 L29,13.6 Z" fill="#e8c890" />
<path d="M27.4,19.6 L47,18.2 L49.6,28.6 L30,30.6 Z" fill="#f0e6d4" />
<path d="M37,22 L45,21.4 L46,27 L38,27.6 Z" fill="#c08a48" />
<path d="M30,21 L35,20.6 L36,29 L31,29.4 Z" fill="#d8c4a0" />
<path d="M51,14.6 L60.6,15 L63.6,23.6 L52.6,26.8 Z" fill="#e0a040" />
<path d="M52.4,20 L62,19 L63.6,23.6 L52.6,26.8 Z" fill="#f0d8a8" />
<path d="M20.6,20.6 L26,19.6 L27.6,31 L17.4,32.6 Z" fill="#d4a050" />
<path d="M22,22 L25,21.6 L26,30 L22.6,30.6 Z" fill="#f0dcb0" />
<path d="M48.6,5.2 L52,12.2 L50.6,12.8 L47.4,6.4 Z M24.2,17.4 L27,18.4 L26.4,19.8 L20.6,20.6 Z" fill="#ffffff" />
<ellipse cx="10" cy="51.6" rx="1.9" ry="1.9" fill="#d8301c" />
<rect x="19" y="49.4" width="12.6" height="4" fill="#c41c20" />
<text transform="translate(25.3 52.5) scale(0.25 0.25)" font-size="8.8" fill="#fff" font-weight="700" font-family='"Liberation Sans","Noto Sans CJK SC",sans-serif' text-anchor="middle" >户型展示</text>
<ellipse cx="39.2" cy="51.6" rx="1.7" ry="2" fill="#ececec" />
<ellipse cx="53.8" cy="51.6" rx="1.7" ry="2" fill="#ececec" />
<ellipse cx="68.6" cy="51.6" rx="1.7" ry="2" fill="#ececec" />
<rect x="0" y="55.8" width="82.6" height="1.6" fill="#0a0e16" />
</g>
<g transform="translate(163.8 339.8)" clip-path="url(#tLc)">
<rect x="0" y="0" width="82.6" height="57.4" fill="url(#l8bg)" />
<ellipse cx="30" cy="5" rx="14" ry="4.5" fill="#f0b030" opacity="0.9" filter="url(#b1)"/>
<ellipse cx="20" cy="12" rx="12" ry="4" fill="#f4c848" opacity="0.8" filter="url(#b1)"/>
<ellipse cx="7" cy="8" rx="5" ry="5.5" fill="#2a2408" filter="url(#b1)"/>
<ellipse cx="76" cy="4" rx="8" ry="5" fill="#2a1a0a" filter="url(#b1)"/>
<ellipse cx="3" cy="3" rx="5" ry="3" fill="#c85a10" filter="url(#bh)"/>
<ellipse cx="55" cy="7.6" rx="12.4" ry="3.8" fill="#4a2c0c" />
<ellipse cx="55" cy="7" rx="11.6" ry="3.2" fill="#f4e8a0" />
<ellipse cx="55" cy="6.8" rx="7" ry="1.8" fill="#d8a030" />
<ellipse cx="75" cy="16" rx="8.6" ry="5.6" fill="#f6e458" />
<ellipse cx="75" cy="15.6" rx="5" ry="3" fill="#f0c838" />
<ellipse cx="40" cy="16" rx="12" ry="3.6" fill="#e8a028" opacity="0.9"/>
<ellipse cx="38" cy="15.6" rx="7" ry="2" fill="#c86a18" />
<ellipse cx="61.6" cy="22.6" rx="15.4" ry="7" fill="#f8ec58" />
<ellipse cx="62" cy="22" rx="9.6" ry="4" fill="#e89a30" />
<ellipse cx="60" cy="21" rx="5" ry="2" fill="#f8d870" />
<ellipse cx="66" cy="23.4" rx="4" ry="1.6" fill="#c86820" />
<path d="M60,30 L82.6,26 L82.6,46 L62,44 Z" fill="#2c1808" />
<path d="M64,32 L80,29 L82,33 L70,37 Z" fill="#f0d870" opacity="0.85"/>
<path d="M66,38 L82.6,36 L82.6,40 L70,42 Z" fill="#e8c050" opacity="0.8"/>
<ellipse cx="54" cy="37.6" rx="9.6" ry="5" fill="#20140a" />
<ellipse cx="54" cy="35" rx="9.4" ry="5.4" fill="#f8ee70" />
<ellipse cx="54" cy="34.4" rx="6" ry="3" fill="#e8b438" />
<ellipse cx="52" cy="30" rx="5.4" ry="2.6" fill="#fcf4a0" />
<path d="M40,46.5 L82.6,45 L82.6,57.4 L40,57.4 Z" fill="#1c1008" />
<ellipse cx="68" cy="55" rx="17" ry="4.4" fill="#d87818" filter="url(#bh)"/>
<path d="M0,19.4 L7,15.3 L44.2,20 L41.9,31.2 L34.3,52.4 L0,47.7 Z" fill="#ec7a14" />
<path d="M0,47.7 L8,49 L8,57.4 L0,57.4 Z" fill="#2a1608" />
<path d="M1,21 L7.6,17.4 L42,21.6 L39.8,31 L33.4,49.6 L0,45 Z" fill="#24201c" />
<path d="M4.6,19.6 L40,24 L33,47 L0.6,42.4 Z" fill="#f4f6fa" />
<path d="M4.6,19.6 L14.6,20.8 L9,43.6 L0.6,42.4 Z" fill="#a8c8f0" />
<path d="M3.4,29 L12.6,30.2 L12,32.6 L2.8,31.4 Z" fill="#3a78d0" />
<path d="M4.6,19.6 L40,24 L39.6,25.4 L4.3,21 Z" fill="#3a3a40" />
<path d="M15,27 L19,27.5 L18,33 L14,32.5 Z" fill="#d8482c" />
<path d="M13,35 L17,35.6 L16,41 L12,40.4 Z" fill="#58a048" />
<rect x="30" y="28" width="6" height="1" fill="#e8a090" />
<rect x="28.4" y="34" width="6" height="1" fill="#e8a090" />
<rect x="27" y="40" width="6" height="1" fill="#e8a090" />
<path d="M8.7,57.4 L12.2,43 L19.2,36.5 L23,37 L26.2,40.6 L30.8,47.7 L32,57.4 Z" fill="#f08412" />
<path d="M19.2,36.5 L23,37 L24,41 L20,41 Z" fill="#f8a848" />
</g>
<g transform="translate(254.5 339.8)" clip-path="url(#tLc)">
<rect x="0" y="0" width="82.6" height="57.4" fill="#0c0c06" />
<path d="M0,20 L40,12 L56,20 L66,26 L82.6,20 L82.6,57.4 L0,57.4 Z" fill="#3aa828" />
<path d="M0,6 L30,2 L46,8 L20,16 L0,18 Z" fill="#2aa83c" />
<path d="M0,12 L34,6 L44,9 L8,18 L0,19 Z" fill="#7ac860" opacity="0.8"/>
<path d="M0,22 L18,16 L46,9 L50,14 L34,20 L26,28 L6,34 L0,34 Z" fill="#e8782a" />
<path d="M2,24 L16,19 L24,22 L22,28 L4,32 Z" fill="#58a888" />
<path d="M22,20 L40,14 L44,17 L32,22 L28,26 Z" fill="#f09a2c" />
<path d="M0,32 L14,30 L30,24 L44,17 L54,13 L57,20 L44,24 L40,30 L26,36 L16,42 L0,42 Z" fill="#f4c020" />
<path d="M0,34 L12,32 L8,40 L0,43 Z" fill="#f08a28" />
<path d="M10,46 L30,36 L42,31 L56,22 L68,16 L72,12 L74,18 L66,24 L62,38 L52,42 L40,50 L30,57.4 L14,57.4 Z" fill="#f6d420" />
<path d="M56,22 L66,17 L72,12 L74,18 L68,22 L60,26 Z" fill="#f0a030" />
<path d="M54,23 L60,21 L58,25 Z" fill="#e03a1c" />
<path d="M0,46 L12,42 L24,38 L30,40 L16,50 L6,57.4 L0,57.4 Z" fill="#3cc428" />
<path d="M0,42 L10,40 L6,46 L0,48 Z" fill="#2a98a0" />
<path d="M30,57.4 L42,50 L54,44 L62,38 L66,26 L76,20 L82.6,18 L82.6,57.4 Z" fill="#48c42c" />
<path d="M64,30 L76,22 L82.6,20 L82.6,44 L72,46 L62,40 Z" fill="#2a9a74" />
<path d="M66,34 L82.6,30 L82.6,38 L70,42 Z" fill="#2a7ab0" opacity="0.8"/>
<path d="M44,52 L54,46 L58,50 L50,57.4 L42,57.4 Z" fill="#2aa0a0" opacity="0.8"/>
<path d="M60,40 L62,28 L64,28 L63,42 Z" fill="#f8f0d0" />
<path d="M74,10 L82.6,8 L82.6,18 L76,20 Z" fill="#1c5a2c" />
<path d="M10,46 L30,36 L32,38 L14,49 Z M26,36 L44,27 L46,29 L30,38 Z" fill="#141008" opacity="0.85"/>
</g>
<rect x="65.3" y="168.8" width="283.8" height="79.6" fill="none" stroke="#e6262a" stroke-width="1.15"/>
<rect x="158.3" y="253.6" width="93.2" height="75" fill="none" stroke="#e6262a" stroke-width="1.15"/>
<rect x="179" y="437.6" width="14.6" height="7.6" fill="#fff" stroke="#dcdcdc" stroke-width="0.5"/>
<text transform="translate(186.3 443.2) scale(0.25 0.25)" font-size="13.6" fill="#666" font-weight="400" font-family='"Liberation Sans","Noto Sans CJK SC",sans-serif' text-anchor="middle" >上一页</text>
<rect x="195.7" y="437.3" width="6" height="8.2" fill="#c80c0c" />
<text transform="translate(198.7 443.3) scale(0.25 0.25)" font-size="15.2" fill="#fff" font-weight="700" font-family='"Liberation Sans","Noto Sans CJK SC",sans-serif' text-anchor="middle" >1</text>
<rect x="203.9" y="437.6" width="6.8" height="7.6" fill="#fff" stroke="#dcdcdc" stroke-width="0.5"/>
<rect x="211.9" y="437.6" width="13.6" height="7.6" fill="#fff" stroke="#dcdcdc" stroke-width="0.5"/>
<text transform="translate(207.3 443.2) scale(0.25 0.25)" font-size="13.6" fill="#666" font-weight="400" font-family='"Liberation Sans","Noto Sans CJK SC",sans-serif' text-anchor="middle" >2</text>
<text transform="translate(218.7 443.2) scale(0.25 0.25)" font-size="13.6" fill="#666" font-weight="400" font-family='"Liberation Sans","Noto Sans CJK SC",sans-serif' text-anchor="middle" >下一页</text>
<rect x="0" y="489" width="415" height="42.5" fill="#202125" />
<rect x="0" y="489" width="415" height="1.1" fill="#8c1418" />
<rect x="0" y="530.8" width="415" height="19.2" fill="#000000" />
<circle cx="87" cy="507.5" r="10.2" fill="none" stroke="#8a8a8e" stroke-width="0.8" stroke-dasharray="44 20" transform="rotate(-120 87 507.5)"/>
<path d="M79.5,503 L88,507 L96,506.5 L94,510 L96.5,516 L92,514 L86,516 L81,512 L84,509.5 Z" fill="#9c9ca0"/>
<text transform="translate(66.5 524.6) scale(0.225 0.25)" font-size="17.6" fill="#8a8a8e" font-weight="400" font-family='"Liberation Sans","Noto Sans CJK SC",sans-serif' text-anchor="start" >N-TOUCH</text>
<text transform="translate(116.5 505) scale(0.25 0.25)" font-size="15.2" fill="#e8e8e8" font-weight="700" font-family='"Liberation Sans","Noto Sans CJK SC",sans-serif' text-anchor="middle" >网站首页</text>
<text transform="translate(146.5 505) scale(0.25 0.25)" font-size="15.2" fill="#e8e8e8" font-weight="700" font-family='"Liberation Sans","Noto Sans CJK SC",sans-serif' text-anchor="middle" >业务介绍</text>
<text transform="translate(176.5 505) scale(0.25 0.25)" font-size="15.2" fill="#e8e8e8" font-weight="700" font-family='"Liberation Sans","Noto Sans CJK SC",sans-serif' text-anchor="middle" >iPad应用</text>
<text transform="translate(207.5 505) scale(0.25 0.25)" font-size="15.2" fill="#e8e8e8" font-weight="700" font-family='"Liberation Sans","Noto Sans CJK SC",sans-serif' text-anchor="middle" >案例应用</text>
<text transform="translate(235.5 505) scale(0.25 0.25)" font-size="15.2" fill="#e8e8e8" font-weight="700" font-family='"Liberation Sans","Noto Sans CJK SC",sans-serif' text-anchor="middle" >触摸屏</text>
<text transform="translate(263.5 505) scale(0.25 0.25)" font-size="15.2" fill="#e8e8e8" font-weight="700" font-family='"Liberation Sans","Noto Sans CJK SC",sans-serif' text-anchor="middle" >联系我们</text>
<rect x="132" y="500.5" width="0.4" height="5" fill="#55565a" />
<rect x="161.5" y="500.5" width="0.4" height="5" fill="#55565a" />
<rect x="192" y="500.5" width="0.4" height="5" fill="#55565a" />
<rect x="222.5" y="500.5" width="0.4" height="5" fill="#55565a" />
<rect x="249" y="500.5" width="0.4" height="5" fill="#55565a" />
<text transform="translate(109.6 513.6) scale(0.25 0.25)" font-size="14.2" fill="#8e8e92" font-weight="400" font-family='"Liberation Sans","Noto Sans CJK SC",sans-serif' text-anchor="start" >地址：青岛市崂山区银川东路青岛国际动漫产业园E座2层 电话0532-85731578 服务热线：0532-66851090</text>
<text transform="translate(109.6 519.4) scale(0.25 0.25)" font-size="14.2" fill="#8e8e92" font-weight="400" font-family='"Liberation Sans","Noto Sans CJK SC",sans-serif' text-anchor="start" >版权所有 侵权 必究 Copyright (C) 2007-2013 Ntouch.cn, All Right</text>
<rect x="109.5" y="522.3" width="14.5" height="3.4" fill="#c8ccd2" />
<rect x="125.8" y="522" width="4.6" height="4.6" fill="#58a064" />
<rect x="132.3" y="522" width="4.6" height="4.6" fill="#d8683a" />
<rect x="138.8" y="522" width="4.6" height="4.6" fill="#3a9ad0" />
<rect x="145.3" y="522" width="4.6" height="4.6" fill="#2a7ad8" />
<rect x="151.8" y="522" width="4.6" height="4.6" fill="#3a62c8" />
<text transform="translate(158.2 526.2) scale(0.25 0.25)" font-size="12.8" fill="#ccc" font-weight="400" font-family='"Liberation Sans","Noto Sans CJK SC",sans-serif' text-anchor="start" >更多</text>
<text transform="translate(89.8 541.4) scale(0.25 0.25)" font-size="14.48" fill="#a8a8a8" font-weight="400" font-family='"Liberation Sans","Noto Sans CJK SC",sans-serif' text-anchor="start" >友情链接：多点触摸 | 电子沙盘 | 青岛装修公司 | ipad答案系统 | 电子课程设计制作 | 电子沙盘制作 | 山东LED屏 | 中国电子沙盘(中国) | 触摸屏 |</text>
<rect x="415" y="0" width="385" height="550" fill="#f4f4f4" />
<rect x="415" y="34" width="385" height="99.9" fill="url(#Rblue)" />
<rect x="782" y="34" width="18" height="99.9" fill="#8fbde8" opacity="0.55"/>
<rect x="415" y="0" width="385" height="9" fill="url(#Rtop)" />
<rect x="415" y="0" width="385" height="9" fill="url(#RtopV)" />
<rect x="415" y="8.8" width="385" height="25.4" fill="#2c362e" />
<g clip-path="url(#RbC)"><use href="#bn" transform="translate(420.8 9.7) scale(0.92)"/></g>
<g clip-path="url(#RbC)"><path transform="translate(420.8 9.7) scale(0.92)" d="M40,27 L55,27 L66,40 L76.4,51 L76.2,103 L71.2,106 L71.2,136 L40,136 Z" fill="url(#RbnL)"/></g>
<g transform="translate(420.8 9.7) scale(0.92)">
<text transform="translate(125.2 54.9) scale(0.29 0.25)" font-size="46.8" fill="#fff" font-weight="900" font-family='"Liberation Sans","Noto Sans CJK SC",sans-serif' text-anchor="start" style="text-shadow:0 0 1px #b05000" stroke="#c86000" stroke-width="0.6" paint-order="stroke">大尺寸触摸屏</text>
<text transform="translate(125.5 65.3) scale(0.25 0.25)" font-size="24.8" fill="#fff" font-weight="700" font-family='"Liberation Sans","Noto Sans CJK SC",sans-serif' text-anchor="start" stroke="#b86a10" stroke-width="0.5" paint-order="stroke">外观样式订制、互动内容开发</text>
<text transform="translate(125.5 76.6) scale(0.25 0.25)" font-size="23.0" fill="#fff6dc" font-weight="400" font-family='"Liberation Sans","Noto Sans CJK SC",sans-serif' text-anchor="start" opacity="0.92">展示、查询、广告机、查询机、导视系统</text>
</g>
<rect x="462.3" y="35.3" width="319.6" height="98.6" fill="none" stroke="#e4484c" stroke-width="0.9"/>
<text transform="translate(484 5.6) scale(0.25 0.25)" font-size="19.6" fill="#f0e0e0" font-weight="900" font-family='"Liberation Sans","Noto Sans CJK SC",sans-serif' text-anchor="start" >普色网络部</text>
<text transform="translate(484 8.2) scale(0.25 0.25)" font-size="6.4" fill="#c8a8a8" font-weight="400" font-family='"Liberation Sans","Noto Sans CJK SC",sans-serif' text-anchor="start" >DIGITAL COLOR NETWORK</text>
<text transform="translate(513 5.6) scale(0.25 0.25)" font-size="12.8" fill="#e8d8d8" font-weight="400" font-family='"Liberation Sans","Noto Sans CJK SC",sans-serif' text-anchor="start" >大幅面 360全景数字平台</text>
<text transform="translate(710 5.2) scale(0.25 0.25)" font-size="12.8" fill="#e0d0d0" font-weight="400" font-family='"Liberation Sans","Noto Sans CJK SC",sans-serif' text-anchor="start" >360度数字专业制图公司</text>
<rect x="747" y="1.2" width="4.2" height="5.2" fill="#6a9ae0" />
<g transform="translate(484.6 15.6) scale(1.0)" fill="none" stroke="#fff" stroke-width="1.25" stroke-linecap="round">
<path d="M0.5,0.8 L8.6,0.8 L4.2,6.4 C8.6,5.6 10.4,9 9.2,12 C7.8,15.4 3,15.6 0.6,13"/>
<circle cx="12.2" cy="11.2" r="3.9"/><path d="M15.6,1 C10.6,3.6 8.2,7.6 8.4,11.6"/>
<circle cx="19.6" cy="11.2" r="3.9"/>
</g>
<g transform="translate(484.6 15.6) scale(1.0)"><path d="M23,3.5 L25.5,3.2 L29,7 L33,7.4 L35.4,10.2 L34,13 L30,12.6 L26.6,9.6 L27.6,8.6 Z" fill="#fff"/><circle cx="24" cy="4.2" r="1.6" fill="none" stroke="#fff" stroke-width="0.6"/><rect x="33.4" y="10.6" width="2" height="2.6" fill="#fff"/></g>
<text transform="translate(540 23.1) scale(0.25 0.25)" font-size="18.0" fill="#ffffff" font-weight="900" font-family='"Liberation Serif","Noto Serif CJK SC",serif' text-anchor="middle" >首页</text>
<text transform="translate(572 23.1) scale(0.25 0.25)" font-size="18.0" fill="#ffffff" font-weight="900" font-family='"Liberation Serif","Noto Serif CJK SC",serif' text-anchor="middle" >关于我们</text>
<text transform="translate(603.5 23.1) scale(0.25 0.25)" font-size="18.0" fill="#ffffff" font-weight="900" font-family='"Liberation Serif","Noto Serif CJK SC",serif' text-anchor="middle" >信息动态</text>
<text transform="translate(635 23.1) scale(0.25 0.25)" font-size="18.0" fill="#ffffff" font-weight="900" font-family='"Liberation Serif","Noto Serif CJK SC",serif' text-anchor="middle" >服务内容</text>
<text transform="translate(666.5 23.1) scale(0.25 0.25)" font-size="18.0" fill="#ffffff" font-weight="900" font-family='"Liberation Serif","Noto Serif CJK SC",serif' text-anchor="middle" >解决方案</text>
<text transform="translate(698 23.1) scale(0.25 0.25)" font-size="18.0" fill="#ffffff" font-weight="900" font-family='"Liberation Serif","Noto Serif CJK SC",serif' text-anchor="middle" >案例应用</text>
<text transform="translate(729.5 23.1) scale(0.25 0.25)" font-size="18.0" fill="#ffffff" font-weight="900" font-family='"Liberation Serif","Noto Serif CJK SC",serif' text-anchor="middle" >联系我们</text>
<rect x="556" y="9" width="0.5" height="25" fill="#232c25" />
<rect x="588" y="9" width="0.5" height="25" fill="#232c25" />
<rect x="620.5" y="9" width="0.5" height="25" fill="#232c25" />
<rect x="652" y="9" width="0.5" height="25" fill="#232c25" />
<rect x="682.8" y="9" width="0.5" height="25" fill="#232c25" />
<rect x="714" y="9" width="0.5" height="25" fill="#232c25" />
<rect x="746" y="9" width="0.5" height="25" fill="#232c25" />
<rect x="470.5" y="135.5" width="281.5" height="369.6" fill="#ffffff" />
<rect x="470.5" y="135.5" width="0.5" height="369" fill="#e6e6e6" />
<rect x="542" y="137" width="0.6" height="358" fill="#e2e2e2" />
<rect x="751.6" y="135.5" width="0.5" height="369" fill="#e6e6e6" />
<text transform="translate(477.3 148.4) scale(0.25 0.25)" font-size="18.8" fill="#222" font-weight="900" font-family='"Liberation Serif","Noto Serif CJK SC",serif' text-anchor="start" >服务内容</text>
<text transform="translate(500.5 148.4) scale(0.25 0.25)" font-size="15.6" fill="#333" font-weight="700" font-family='"Liberation Serif","Noto Serif CJK SC",serif' text-anchor="start" >SERVICES</text>
<rect x="475" y="149.8" width="63.4" height="0.8" fill="#333" />
<text transform="translate(477.6 161.35) scale(0.25 0.25)" font-size="13.6" fill="#1e1e1e" font-weight="700" font-family='"Liberation Sans","Noto Sans CJK SC",sans-serif' text-anchor="start" >ipad虚拟销售系统</text>
<line x1="475.5" y1="164.9" x2="538" y2="164.9" stroke="#d0d0d0" stroke-width="0.5" stroke-dasharray="0.8 0.6"/>
<text transform="translate(477.6 171.2) scale(0.25 0.25)" font-size="13.6" fill="#1e1e1e" font-weight="700" font-family='"Liberation Sans","Noto Sans CJK SC",sans-serif' text-anchor="start" >3d/ 3D互动展示营销系统</text>
<line x1="475.5" y1="174.75" x2="538" y2="174.75" stroke="#d0d0d0" stroke-width="0.5" stroke-dasharray="0.8 0.6"/>
<text transform="translate(477.6 181.04999999999998) scale(0.25 0.25)" font-size="13.6" fill="#1e1e1e" font-weight="700" font-family='"Liberation Sans","Noto Sans CJK SC",sans-serif' text-anchor="start" >三维动画/地产宣传片</text>
<line x1="475.5" y1="184.6" x2="538" y2="184.6" stroke="#d0d0d0" stroke-width="0.5" stroke-dasharray="0.8 0.6"/>
<text transform="translate(477.6 190.9) scale(0.25 0.25)" font-size="13.6" fill="#1e1e1e" font-weight="700" font-family='"Liberation Sans","Noto Sans CJK SC",sans-serif' text-anchor="start" >触摸屏/大屏互动查询系统</text>
<line x1="475.5" y1="194.45000000000002" x2="538" y2="194.45000000000002" stroke="#d0d0d0" stroke-width="0.5" stroke-dasharray="0.8 0.6"/>
<text transform="translate(477.6 200.75) scale(0.25 0.25)" font-size="13.6" fill="#1e1e1e" font-weight="700" font-family='"Liberation Sans","Noto Sans CJK SC",sans-serif' text-anchor="start" >多点触摸系统</text>
<line x1="475.5" y1="204.3" x2="538" y2="204.3" stroke="#d0d0d0" stroke-width="0.5" stroke-dasharray="0.8 0.6"/>
<text transform="translate(477.6 210.6) scale(0.25 0.25)" font-size="13.6" fill="#1e1e1e" font-weight="700" font-family='"Liberation Sans","Noto Sans CJK SC",sans-serif' text-anchor="start" >环幕影视及3D4D电厂</text>
<line x1="475.5" y1="214.15" x2="538" y2="214.15" stroke="#d0d0d0" stroke-width="0.5" stroke-dasharray="0.8 0.6"/>
<text transform="translate(477.6 220.45) scale(0.25 0.25)" font-size="13.6" fill="#1e1e1e" font-weight="700" font-family='"Liberation Sans","Noto Sans CJK SC",sans-serif' text-anchor="start" >投影显示系统</text>
<line x1="475.5" y1="224.0" x2="538" y2="224.0" stroke="#d0d0d0" stroke-width="0.5" stroke-dasharray="0.8 0.6"/>
<text transform="translate(477.6 230.29999999999998) scale(0.25 0.25)" font-size="13.6" fill="#1e1e1e" font-weight="700" font-family='"Liberation Sans","Noto Sans CJK SC",sans-serif' text-anchor="start" >互动地面投影</text>
<line x1="475.5" y1="233.85" x2="538" y2="233.85" stroke="#d0d0d0" stroke-width="0.5" stroke-dasharray="0.8 0.6"/>
<text transform="translate(477.6 240.15) scale(0.25 0.25)" font-size="13.6" fill="#1e1e1e" font-weight="700" font-family='"Liberation Sans","Noto Sans CJK SC",sans-serif' text-anchor="start" >全息互动投影</text>
<line x1="475.5" y1="243.70000000000002" x2="538" y2="243.70000000000002" stroke="#d0d0d0" stroke-width="0.5" stroke-dasharray="0.8 0.6"/>
<text transform="translate(477.6 249.99999999999997) scale(0.25 0.25)" font-size="13.6" fill="#1e1e1e" font-weight="700" font-family='"Liberation Sans","Noto Sans CJK SC",sans-serif' text-anchor="start" >数字展厅</text>
<line x1="475.5" y1="253.54999999999998" x2="538" y2="253.54999999999998" stroke="#d0d0d0" stroke-width="0.5" stroke-dasharray="0.8 0.6"/>
<text transform="translate(477.6 259.85) scale(0.25 0.25)" font-size="13.6" fill="#1e1e1e" font-weight="700" font-family='"Liberation Sans","Noto Sans CJK SC",sans-serif' text-anchor="start" >数字沙盘</text>
<line x1="475.5" y1="263.4" x2="538" y2="263.4" stroke="#d0d0d0" stroke-width="0.5" stroke-dasharray="0.8 0.6"/>
<text transform="translate(477.6 269.70000000000005) scale(0.25 0.25)" font-size="13.6" fill="#1e1e1e" font-weight="700" font-family='"Liberation Sans","Noto Sans CJK SC",sans-serif' text-anchor="start" >虚拟现实 V R T</text>
<line x1="475.5" y1="273.25" x2="538" y2="273.25" stroke="#d0d0d0" stroke-width="0.5" stroke-dasharray="0.8 0.6"/>
<text transform="translate(477.6 279.55) scale(0.25 0.25)" font-size="13.6" fill="#1e1e1e" font-weight="700" font-family='"Liberation Sans","Noto Sans CJK SC",sans-serif' text-anchor="start" >虚拟翻书</text>
<line x1="475.5" y1="283.09999999999997" x2="538" y2="283.09999999999997" stroke="#d0d0d0" stroke-width="0.5" stroke-dasharray="0.8 0.6"/>
<text transform="translate(477.6 289.4) scale(0.25 0.25)" font-size="13.6" fill="#1e1e1e" font-weight="700" font-family='"Liberation Sans","Noto Sans CJK SC",sans-serif' text-anchor="start" >场地沙模型</text>
<line x1="475.5" y1="292.94999999999993" x2="538" y2="292.94999999999993" stroke="#d0d0d0" stroke-width="0.5" stroke-dasharray="0.8 0.6"/>
<text transform="translate(477.3 307) scale(0.25 0.25)" font-size="18.8" fill="#222" font-weight="900" font-family='"Liberation Serif","Noto Serif CJK SC",serif' text-anchor="start" >解决方案</text>
<text transform="translate(500.5 307) scale(0.25 0.25)" font-size="15.6" fill="#333" font-weight="700" font-family='"Liberation Serif","Noto Serif CJK SC",serif' text-anchor="start" >SOLUTION</text>
<rect x="475" y="308.4" width="63.4" height="0.8" fill="#333" />
<text transform="translate(477.6 319.65000000000003) scale(0.25 0.25)" font-size="13.6" fill="#1e1e1e" font-weight="700" font-family='"Liberation Sans","Noto Sans CJK SC",sans-serif' text-anchor="start" >iPad视觉营销推广解决方案</text>
<line x1="475.5" y1="323.2" x2="538" y2="323.2" stroke="#d0d0d0" stroke-width="0.5" stroke-dasharray="0.8 0.6"/>
<text transform="translate(477.6 329.50000000000006) scale(0.25 0.25)" font-size="13.6" fill="#1e1e1e" font-weight="700" font-family='"Liberation Sans","Noto Sans CJK SC",sans-serif' text-anchor="start" >企业形式营销解决方案</text>
<line x1="475.5" y1="333.05" x2="538" y2="333.05" stroke="#d0d0d0" stroke-width="0.5" stroke-dasharray="0.8 0.6"/>
<text transform="translate(477.6 339.35) scale(0.25 0.25)" font-size="13.6" fill="#1e1e1e" font-weight="700" font-family='"Liberation Sans","Noto Sans CJK SC",sans-serif' text-anchor="start" >房地产区域营销解决方案</text>
<line x1="475.5" y1="342.9" x2="538" y2="342.9" stroke="#d0d0d0" stroke-width="0.5" stroke-dasharray="0.8 0.6"/>
<text transform="translate(477.6 349.20000000000005) scale(0.25 0.25)" font-size="13.6" fill="#1e1e1e" font-weight="700" font-family='"Liberation Sans","Noto Sans CJK SC",sans-serif' text-anchor="start" >互动展厅/非电子解决方案</text>
<line x1="475.5" y1="352.75" x2="538" y2="352.75" stroke="#d0d0d0" stroke-width="0.5" stroke-dasharray="0.8 0.6"/>
<text transform="translate(477.6 359.05) scale(0.25 0.25)" font-size="13.6" fill="#1e1e1e" font-weight="700" font-family='"Liberation Sans","Noto Sans CJK SC",sans-serif' text-anchor="start" >展览展示设计方案</text>
<line x1="475.5" y1="362.59999999999997" x2="538" y2="362.59999999999997" stroke="#d0d0d0" stroke-width="0.5" stroke-dasharray="0.8 0.6"/>
<text transform="translate(477.6 368.90000000000003) scale(0.25 0.25)" font-size="13.6" fill="#1e1e1e" font-weight="700" font-family='"Liberation Sans","Noto Sans CJK SC",sans-serif' text-anchor="start" >数字会议和科互动教学解决方案</text>
<line x1="475.5" y1="372.45" x2="538" y2="372.45" stroke="#d0d0d0" stroke-width="0.5" stroke-dasharray="0.8 0.6"/>
<text transform="translate(477.6 378.75) scale(0.25 0.25)" font-size="13.6" fill="#1e1e1e" font-weight="700" font-family='"Liberation Sans","Noto Sans CJK SC",sans-serif' text-anchor="start" >三维动画/宣传片制作方案</text>
<line x1="475.5" y1="382.29999999999995" x2="538" y2="382.29999999999995" stroke="#d0d0d0" stroke-width="0.5" stroke-dasharray="0.8 0.6"/>
<text transform="translate(477.3 396.5) scale(0.25 0.25)" font-size="18.8" fill="#222" font-weight="900" font-family='"Liberation Serif","Noto Serif CJK SC",serif' text-anchor="start" >联系我们</text>
<text transform="translate(500.5 396.5) scale(0.25 0.25)" font-size="15.6" fill="#333" font-weight="700" font-family='"Liberation Serif","Noto Serif CJK SC",serif' text-anchor="start" >CONTACT US</text>
<rect x="475" y="397.9" width="63.4" height="0.8" fill="#333" />
<g transform="translate(480.6 403.6)">
<path d="M5,26 C6,21 9,19 13,18 L22,17.4 C27,19 30,22 30,26 Z" fill="#d6d4ea"/>
<path d="M12,18 L16,23.4 L21.4,17.4 Z" fill="#ffffff"/>
<path d="M16,23.4 L21.4,17.4 L24.4,19 L19,26 L15,26 Z" fill="#26262c"/>
<ellipse cx="14.6" cy="7.8" rx="8.6" ry="7.4" fill="#3a2016"/>
<ellipse cx="16.2" cy="10.4" rx="5.5" ry="6.5" fill="#ecc0a0" transform="rotate(-14 16.2 10.4)"/>
<path d="M7,2.6 C12,-1.4 20,-0.4 22.6,4.6 C18,2.6 12.6,3 9,8 Z" fill="#2c160e"/>
<path d="M3.6,10 L8.4,7 L11,14.4 L8.6,22 L3.4,19.6 Z" fill="#e2ae8e"/>
<path d="M8.6,12.6 L14.6,16.4" stroke="#222" stroke-width="0.9" fill="none"/>
<path d="M14,14.6 q2.4,1.6 4.6,-0.4" stroke="#b05848" stroke-width="0.8" fill="none"/>
</g>
<g transform="translate(480.6 433)">
<path d="M5,26 C6,21 9,19 13,18 L22,17.4 C27,19 30,22 30,26 Z" fill="#d6d4ea"/>
<path d="M12,18 L16,23.4 L21.4,17.4 Z" fill="#ffffff"/>
<path d="M16,23.4 L21.4,17.4 L24.4,19 L19,26 L15,26 Z" fill="#26262c"/>
<ellipse cx="14.6" cy="7.8" rx="8.6" ry="7.4" fill="#3a2016"/>
<ellipse cx="16.2" cy="10.4" rx="5.5" ry="6.5" fill="#ecc0a0" transform="rotate(-14 16.2 10.4)"/>
<path d="M7,2.6 C12,-1.4 20,-0.4 22.6,4.6 C18,2.6 12.6,3 9,8 Z" fill="#2c160e"/>
<path d="M3.6,10 L8.4,7 L11,14.4 L8.6,22 L3.4,19.6 Z" fill="#e2ae8e"/>
<path d="M8.6,12.6 L14.6,16.4" stroke="#222" stroke-width="0.9" fill="none"/>
<path d="M14,14.6 q2.4,1.6 4.6,-0.4" stroke="#b05848" stroke-width="0.8" fill="none"/>
</g>
<text transform="translate(475.5 468.2) scale(0.25 0.25)" font-size="15.2" fill="#222" font-weight="700" font-family='"Liberation Serif","Noto Serif CJK SC",serif' text-anchor="start" >TEL</text>
<text transform="translate(482.6 468.6) scale(0.28 0.25)" font-size="26.4" fill="#222" font-weight="900" font-family='"Liberation Serif","Noto Serif CJK SC",serif' text-anchor="start" >0755-33154188</text>
<text transform="translate(475.5 474.5) scale(0.25 0.25)" font-size="13.2" fill="#111" font-weight="900" font-family='"Liberation Sans","Noto Sans CJK SC",sans-serif' text-anchor="start" >客服咨询</text>
<rect x="490.6" y="471.4" width="18.2" height="3.9" fill="#1c1c1c" />
<rect x="509.6" y="471.4" width="17.6" height="3.9" fill="#1c1c1c" />
<text transform="translate(499.7 474.5) scale(0.25 0.25)" font-size="12" fill="#fff" font-weight="700" font-family='"Liberation Sans","Noto Sans CJK SC",sans-serif' text-anchor="middle" >在线QQ1</text>
<text transform="translate(518.4 474.5) scale(0.25 0.25)" font-size="12" fill="#fff" font-weight="700" font-family='"Liberation Sans","Noto Sans CJK SC",sans-serif' text-anchor="middle" >在线QQ2</text>
<text transform="translate(475.5 480) scale(0.25 0.25)" font-size="14.0" fill="#444" font-weight="400" font-family='"Liberation Sans","Noto Sans CJK SC",sans-serif' text-anchor="start" >地址：深圳市龙岗区龙翔银行6楼3号</text>
<text transform="translate(494.5 485.2) scale(0.25 0.25)" font-size="14.0" fill="#444" font-weight="400" font-family='"Liberation Sans","Noto Sans CJK SC",sans-serif' text-anchor="start" >电商园C1栋四门二层</text>
<text transform="translate(475.5 491) scale(0.25 0.25)" font-size="13.6" fill="#444" font-weight="400" font-family='"Liberation Mono","Noto Sans CJK SC",monospace' text-anchor="start" >官网： www . 360dmc . com</text>
<path d="M556,141.8 l1.8,1.5 l-1.8,1.5 z" fill="#444"/>
<text transform="translate(563 145.1) scale(0.25 0.25)" font-size="18.4" fill="#222" font-weight="900" font-family='"Liberation Serif","Noto Serif CJK SC",serif' text-anchor="start" >首页</text>
<text transform="translate(574.2 145) scale(0.25 0.25)" font-size="18.4" fill="#222" font-weight="700" font-family='"Liberation Serif","Noto Serif CJK SC",serif' text-anchor="start" >&gt;</text>
<text transform="translate(579.4 145.1) scale(0.25 0.25)" font-size="18.4" fill="#222" font-weight="900" font-family='"Liberation Serif","Noto Serif CJK SC",serif' text-anchor="start" >案例应用</text>
<rect x="550.2" y="156.6" width="62.8" height="54.2" fill="#fff" stroke="#e4e4e4" stroke-width="0.5"/>
<rect x="551.2" y="200.5" width="60.8" height="8.6" fill="#f1f1f1" />
<text transform="translate(552.5 206.8) scale(0.25 0.25)" font-size="13.52" fill="#1e1e1e" font-weight="700" font-family='"Liberation Sans","Noto Sans CJK SC",sans-serif' text-anchor="start" >Ipad答案系统的界面功能展示</text>
<rect x="617.3000000000001" y="156.6" width="62.8" height="54.2" fill="#fff" stroke="#e4e4e4" stroke-width="0.5"/>
<rect x="618.3000000000001" y="200.5" width="60.8" height="8.6" fill="#f1f1f1" />
<text transform="translate(619.6 206.8) scale(0.25 0.25)" font-size="13.52" fill="#1e1e1e" font-weight="700" font-family='"Liberation Sans","Noto Sans CJK SC",sans-serif' text-anchor="start" >Ipad答案系统楼书、户型展示</text>
<rect x="684.3000000000001" y="156.6" width="62.8" height="54.2" fill="#fff" stroke="#e4e4e4" stroke-width="0.5"/>
<rect x="685.3000000000001" y="200.5" width="60.8" height="8.6" fill="#f1f1f1" />
<text transform="translate(686.6 206.8) scale(0.25 0.25)" font-size="13.52" fill="#1e1e1e" font-weight="700" font-family='"Liberation Sans","Noto Sans CJK SC",sans-serif' text-anchor="start" >科城正谷景园触摸屏一体机互动系统</text>
<rect x="550.2" y="217.6" width="62.8" height="54.2" fill="#fff" stroke="#e4e4e4" stroke-width="0.5"/>
<rect x="551.2" y="261.5" width="60.8" height="8.6" fill="#f1f1f1" />
<text transform="translate(552.5 267.8) scale(0.25 0.25)" font-size="13.52" fill="#1e1e1e" font-weight="700" font-family='"Liberation Sans","Noto Sans CJK SC",sans-serif' text-anchor="start" >iPad点餐系统</text>
<rect x="617.3000000000001" y="217.6" width="62.8" height="54.2" fill="#fff" stroke="#e4e4e4" stroke-width="0.5"/>
<rect x="618.3000000000001" y="261.5" width="60.8" height="8.6" fill="#f1f1f1" />
<text transform="translate(619.6 267.8) scale(0.25 0.25)" font-size="13.52" fill="#1e1e1e" font-weight="700" font-family='"Liberation Sans","Noto Sans CJK SC",sans-serif' text-anchor="start" >室内虚拟样板房</text>
<rect x="684.3000000000001" y="217.6" width="62.8" height="54.2" fill="#fff" stroke="#e4e4e4" stroke-width="0.5"/>
<rect x="685.3000000000001" y="261.5" width="60.8" height="8.6" fill="#f1f1f1" />
<text transform="translate(686.6 267.8) scale(0.25 0.25)" font-size="13.52" fill="#1e1e1e" font-weight="700" font-family='"Liberation Sans","Noto Sans CJK SC",sans-serif' text-anchor="start" >46-ip800立式广告机</text>
<rect x="550.2" y="278.7" width="62.8" height="54.2" fill="#fff" stroke="#e4e4e4" stroke-width="0.5"/>
<rect x="551.2" y="322.6" width="60.8" height="8.6" fill="#f1f1f1" />
<text transform="translate(552.5 328.9) scale(0.25 0.25)" font-size="13.52" fill="#1e1e1e" font-weight="700" font-family='"Liberation Sans","Noto Sans CJK SC",sans-serif' text-anchor="start" >42-ts900立式翻书</text>
<rect x="617.3000000000001" y="278.7" width="62.8" height="54.2" fill="#fff" stroke="#e4e4e4" stroke-width="0.5"/>
<rect x="618.3000000000001" y="322.6" width="60.8" height="8.6" fill="#f1f1f1" />
<text transform="translate(619.6 328.9) scale(0.25 0.25)" font-size="13.52" fill="#1e1e1e" font-weight="700" font-family='"Liberation Sans","Noto Sans CJK SC",sans-serif' text-anchor="start" >47-ip800立式广告机</text>
<rect x="684.3000000000001" y="278.7" width="62.8" height="54.2" fill="#fff" stroke="#e4e4e4" stroke-width="0.5"/>
<rect x="685.3000000000001" y="322.6" width="60.8" height="8.6" fill="#f1f1f1" />
<text transform="translate(686.6 328.9) scale(0.25 0.25)" font-size="13.52" fill="#1e1e1e" font-weight="700" font-family='"Liberation Sans","Noto Sans CJK SC",sans-serif' text-anchor="start" >绿力地产-ipad户型互动展示</text>
<rect x="550.2" y="340.0" width="62.8" height="54.2" fill="#fff" stroke="#e4e4e4" stroke-width="0.5"/>
<rect x="551.2" y="383.90000000000003" width="60.8" height="8.6" fill="#f1f1f1" />
<text transform="translate(552.5 390.2) scale(0.25 0.25)" font-size="13.52" fill="#1e1e1e" font-weight="700" font-family='"Liberation Sans","Noto Sans CJK SC",sans-serif' text-anchor="start" >32-ts800立式查询机</text>
<rect x="617.3000000000001" y="340.0" width="62.8" height="54.2" fill="#fff" stroke="#e4e4e4" stroke-width="0.5"/>
<rect x="618.3000000000001" y="383.90000000000003" width="60.8" height="8.6" fill="#f1f1f1" />
<text transform="translate(619.6 390.2) scale(0.25 0.25)" font-size="13.52" fill="#1e1e1e" font-weight="700" font-family='"Liberation Sans","Noto Sans CJK SC",sans-serif' text-anchor="start" >55-ip800壁挂式一体机</text>
<rect x="684.3000000000001" y="340.0" width="62.8" height="54.2" fill="#fff" stroke="#e4e4e4" stroke-width="0.5"/>
<rect x="685.3000000000001" y="383.90000000000003" width="60.8" height="8.6" fill="#f1f1f1" />
<text transform="translate(686.6 390.2) scale(0.25 0.25)" font-size="13.52" fill="#1e1e1e" font-weight="700" font-family='"Liberation Sans","Noto Sans CJK SC",sans-serif' text-anchor="start" >55-ts900立式查询</text>
<g transform="translate(551.5 157.9)" clip-path="url(#tRc)">
<rect x="0" y="0" width="60.2" height="41.8" fill="#3a86c8" />
<rect x="0" y="0" width="60.2" height="1" fill="#0a1434" />
<rect x="0" y="1" width="60.2" height="4.6" fill="#4668cc" />
<rect x="0" y="2.2" width="60.2" height="1.6" fill="#6486dc" />
<rect x="0" y="5.6" width="60.2" height="6" fill="url(#r1sky)" />
<rect x="0" y="11" width="60.2" height="8.2" fill="#7a4a12" />
<rect x="0.4" y="11.4" width="2.5" height="5.4" fill="#e8a030" />
<rect x="4.45" y="12.3" width="2.5" height="6.4" fill="#c87a1c" />
<rect x="8.5" y="13.200000000000001" width="2.5" height="5.4" fill="#f4c050" />
<rect x="12.549999999999999" y="11.4" width="2.5" height="6.4" fill="#a86418" />
<rect x="16.599999999999998" y="12.3" width="2.5" height="5.4" fill="#e8a030" />
<rect x="20.65" y="13.200000000000001" width="2.5" height="6.4" fill="#c87a1c" />
<rect x="24.699999999999996" y="11.4" width="2.5" height="5.4" fill="#f4c050" />
<rect x="28.749999999999996" y="12.3" width="2.5" height="6.4" fill="#a86418" />
<rect x="32.8" y="13.200000000000001" width="2.5" height="5.4" fill="#e8a030" />
<rect x="36.849999999999994" y="11.4" width="2.5" height="6.4" fill="#c87a1c" />
<rect x="40.9" y="12.3" width="2.5" height="5.4" fill="#f4c050" />
<rect x="44.949999999999996" y="13.200000000000001" width="2.5" height="6.4" fill="#a86418" />
<rect x="48.99999999999999" y="11.4" width="2.5" height="5.4" fill="#e8a030" />
<rect x="53.05" y="12.3" width="2.5" height="6.4" fill="#c87a1c" />
<rect x="57.099999999999994" y="13.200000000000001" width="2.5" height="5.4" fill="#f4c050" />
<path d="M0,11 L7,12.4 L12,12 L12,16 L0,17 Z" fill="#2a2210" opacity="0.75"/>
<ellipse cx="30" cy="18.6" rx="26" ry="1.4" fill="#f0c868" opacity="0.7"/>
<path d="M0,19 L60.2,19 L60.2,29 L0,29 Z" fill="#34b4b4" />
<ellipse cx="36" cy="24.8" rx="20" ry="2" fill="#c8f4f0" opacity="0.9" filter="url(#bh)"/>
<path d="M0,26.4 C18,23.6 40,29.4 60.2,26 L60.2,29 L0,29 Z" fill="#1c8c9c" opacity="0.85"/>
<path d="M0,22.6 C8,22 18,24 26,28.6 L0,29.2 Z" fill="#1c1410" />
<path d="M0,27 L20,28.4 L28,30.6 L0,30.6 Z" fill="#b8601c" />
<rect x="0" y="29.4" width="60.2" height="1.6" fill="#181a22" />
<path d="M0,29.4 L24,29.4 L30,31 L0,31 Z" fill="#8a4a18" />
<rect x="0" y="31" width="60.2" height="9" fill="#3c8ce6" />
<rect x="1" y="34.4" width="10.6" height="1.8" fill="#1c2c4c" />
<rect x="13.2" y="34.4" width="10.4" height="1.8" fill="#f0f6ff" />
<rect x="49.6" y="32.6" width="2.8" height="2.8" fill="#d84a6a" />
<rect x="53.4" y="34.6" width="3" height="1.6" fill="#e8f0fc" />
<rect x="44" y="34.6" width="3" height="1.4" fill="#a8c8f0" />
<rect x="0" y="40" width="60.2" height="1.8" fill="#16203c" />
<rect x="3.4" y="40.3" width="9.8" height="1.2" fill="#e0e8f4" />
<rect x="14.8" y="40.3" width="9.8" height="1.2" fill="#e0e8f4" />
<rect x="26.2" y="40.3" width="9.8" height="1.2" fill="#e0e8f4" />
<rect x="37.6" y="40.3" width="9.8" height="1.2" fill="#e0e8f4" />
<rect x="49.0" y="40.3" width="9.8" height="1.2" fill="#e0e8f4" />
</g>
<g transform="translate(618.6 157.9)" clip-path="url(#tRc)">
<rect x="0" y="0" width="60.2" height="41.8" fill="#15100e" />
<ellipse cx="53" cy="2.6" rx="10" ry="5.6" fill="#4a2488" filter="url(#b1)"/>
<ellipse cx="46" cy="6" rx="4" ry="3" fill="#c8a0e8" opacity="0.7" filter="url(#bh)"/>
<rect x="17" y="1.6" width="22" height="3.6" fill="#8a1c14" />
<text transform="translate(28 4.5) scale(0.25 0.25)" font-size="8.8" fill="#f0d8a0" font-weight="700" font-family='"Liberation Sans","Noto Sans CJK SC",sans-serif' text-anchor="middle" >楼书系统展示</text>
<path d="M1,3 L9,2 L9,8 L1,9 Z" fill="#8a7a3a" />
<path d="M1,9 L10,7 L10,22 L1,24 Z" fill="#8a9c68" />
<path d="M10,7 L19,9 L19,21 L10,22 Z" fill="#d8d0b4" />
<path d="M1,16 L10,15 L10,22 L1,24 Z" fill="#5a7a3a" />
<path d="M1,24 L19,21 L19,27 L1,29 Z" fill="#3a4a20" />
<rect x="22.5" y="9" width="19" height="16.5" fill="#56741f" />
<rect x="22.5" y="9" width="19" height="5" fill="#c4a032" />
<rect x="22.5" y="20" width="19" height="5.5" fill="#2c4a1c" />
<rect x="27" y="15" width="10" height="4" fill="#a8c860" />
<path d="M43.5,9 L50,8 L50,23 L43.5,24 Z" fill="#3a7a4a" />
<path d="M51,7 L58.6,8.6 L58.6,24 L51,23 Z" fill="#6ab84a" />
<path d="M51,7 L58.6,8.6 L58.6,13 L51,12 Z" fill="#c8e8f0" />
<rect x="0" y="27.4" width="60.2" height="14.4" fill="#160c18" />
<rect x="1.6" y="29.4" width="13" height="10" fill="#c8b490" />
<rect x="3" y="31" width="6" height="5" fill="#e8dcc0" />
<rect x="1.6" y="36" width="13" height="3.4" fill="#7a5a3a" />
<rect x="17" y="30" width="13" height="9" fill="#26122e" />
<rect x="32.6" y="29.2" width="12.6" height="11.4" fill="#f8f8f4" />
<path d="M37,31 l4,0 l0,3 l2,0 l0,4 l-7,0 l0,-4 l1,0 z" fill="#c8c0a8" />
<rect x="47" y="30" width="11.6" height="9" fill="#261430" />
</g>
<g transform="translate(685.6 157.9)" clip-path="url(#tRc)">
<rect x="0" y="0" width="60.2" height="41.8" fill="url(#r3bg)" />
<text transform="translate(1.6 3.6) scale(0.25 0.25)" font-size="8.8" fill="#c8b49a" font-weight="700" font-family='"Liberation Sans","Noto Sans CJK SC",sans-serif' text-anchor="start" >Vanke</text>
<rect x="24" y="7.4" width="12" height="0.6" fill="#b89a78" />
<rect x="26" y="9.4" width="8" height="0.5" fill="#8a7458" />
<path d="M18,19.5 C24,15.5 36,15.5 42,19.5 L44,22 L16,22 Z" fill="#8a6450" />
<path d="M3,25 L14,22 L46,22 L57,25 L58,40 L2,40 Z" fill="#4e281c" />
<path d="M14,22 L46,22 L46,40 L14,40 Z" fill="#6a3826" />
<path d="M22,20 L38,20 L38,40 L22,40 Z" fill="#8a4e34" />
<rect x="16" y="25" width="1.6" height="4.6" fill="#d8b070" />
<rect x="19.6" y="25" width="1.6" height="4.6" fill="#d8b070" />
<rect x="40" y="25" width="1.6" height="4.6" fill="#d8b070" />
<rect x="43.4" y="25" width="1.6" height="4.6" fill="#d8b070" />
<rect x="24" y="23.5" width="2.2" height="6.6" fill="#ecd090" />
<rect x="28.6" y="23.5" width="2.2" height="6.6" fill="#ecd090" />
<rect x="33.2" y="23.5" width="2.2" height="6.6" fill="#ecd090" />
<rect x="5" y="28" width="1.5" height="3.6" fill="#a87848" />
<rect x="8.6" y="28" width="1.5" height="3.6" fill="#a87848" />
<rect x="50" y="28" width="1.5" height="3.6" fill="#a87848" />
<rect x="53.6" y="28" width="1.5" height="3.6" fill="#a87848" />
<rect x="17" y="33.5" width="2" height="4.6" fill="#c89858" />
<rect x="24" y="33.5" width="2" height="4.6" fill="#c89858" />
<rect x="29" y="33.5" width="2" height="4.6" fill="#c89858" />
<rect x="34" y="33.5" width="2" height="4.6" fill="#c89858" />
<rect x="41" y="33.5" width="2" height="4.6" fill="#c89858" />
<rect x="2" y="31.6" width="56" height="0.8" fill="#a87858" opacity="0.6"/>
<rect x="0" y="39" width="60.2" height="2.8" fill="#1c120c" />
<path d="M0,30 L4,27 L6,40 L0,40 Z M60.2,30 L56,27 L54,40 L60.2,40 Z" fill="#1c140c" />
</g>
<g transform="translate(551.5 218.9)" clip-path="url(#tRc)">
<rect x="0" y="0" width="60.2" height="41.8" fill="url(#r4bg)" />
<ellipse cx="48" cy="6" rx="16" ry="9" fill="#d0b48c" opacity="0.8" filter="url(#b2)"/>
<rect x="0" y="30" width="60.2" height="11.8" fill="#3c1e10" />
<rect x="0" y="30" width="60.2" height="1.2" fill="#6a3c1c" />
<rect x="8" y="0.8" width="22" height="1.4" fill="#c8a878" opacity="0.8"/>
<rect x="40" y="9.4" width="6" height="1.6" fill="#2a1c14" />
<rect x="40" y="13" width="17" height="2.2" fill="#3a281c" />
<rect x="40" y="16.4" width="13" height="0.8" fill="#5a4030" />
<path d="M6.4,4.6 C6.4,3.4 7.2,2.8 8.4,2.8 L35.6,2.8 C36.8,2.8 37.6,3.4 37.6,4.6 L37.6,31.4 C37.6,32.6 36.8,33.4 35.6,33.4 L8.4,33.4 C7.2,33.4 6.4,32.6 6.4,31.4 Z" fill="#141210" />
<rect x="9" y="6" width="8" height="24" fill="#7a4a24" />
<rect x="9" y="6" width="8" height="5" fill="#a06a38" />
<rect x="9" y="20" width="8" height="4" fill="#5a3018" />
<rect x="14.4" y="5.6" width="19.6" height="25" fill="#f6f4ee" />
<rect x="15.4" y="7" width="5" height="8" fill="#c8a080" />
<rect x="15.4" y="17" width="5" height="6" fill="#a87850" />
<path d="M24,24 C26,16 28,12 31,9 C31,15 29,22 26,26 Z" fill="#c87a3a" />
<rect x="22" y="7" width="9" height="0.8" fill="#b8b0a0" />
<ellipse cx="15.5" cy="34.6" rx="2.4" ry="2.2" fill="#e88a20" />
<ellipse cx="19.9" cy="34.6" rx="2.4" ry="2.2" fill="#e88a20" />
<ellipse cx="24.3" cy="34.6" rx="2.4" ry="2.2" fill="#e88a20" />
<ellipse cx="28.700000000000003" cy="34.6" rx="2.4" ry="2.2" fill="#e88a20" />
<ellipse cx="33.1" cy="34.6" rx="2.4" ry="2.2" fill="#e88a20" />
<ellipse cx="15.5" cy="36.4" rx="2.4" ry="1.3" fill="#f4ecd8" />
<ellipse cx="19.9" cy="36.4" rx="2.4" ry="1.3" fill="#f4ecd8" />
<ellipse cx="24.3" cy="36.4" rx="2.4" ry="1.3" fill="#f4ecd8" />
<ellipse cx="28.700000000000003" cy="36.4" rx="2.4" ry="1.3" fill="#f4ecd8" />
<ellipse cx="33.1" cy="36.4" rx="2.4" ry="1.3" fill="#f4ecd8" />
<path d="M12,30.5 l5,-2 l3,2 z M22,30 l4,-2 l4,2.4 z" fill="#3c7a28" />
<ellipse cx="43.6" cy="37.4" rx="11.4" ry="3.4" fill="#ece8e0" />
<path d="M36.6,27.6 L50.6,27.6 C50.6,33 48.6,37.4 43.6,37.4 C38.6,37.4 36.6,33 36.6,27.6 Z" fill="#f8f6f2" />
<ellipse cx="43.6" cy="27.6" rx="7" ry="2.2" fill="#fcfaf6" />
<ellipse cx="43.6" cy="27.9" rx="5.6" ry="1.5" fill="#4a2814" />
<path d="M50.4,29 C54,28.4 54.4,32.6 49.6,33.4 L49.8,32.2 C52.6,31.6 52.4,29.8 50.4,30.2 Z" fill="#f0ece4" />
<path d="M50,38 l5,-2.6 l2,3.4 z" fill="#3c7a28" />
</g>
<g transform="translate(618.6 218.9)" clip-path="url(#tRc)">
<rect x="0" y="0" width="60.2" height="41.8" fill="#e4e0d8" />
<path d="M0,0 L60.2,0 L60.2,6 L52,14.6 L21,14.6 L4,3 L0,3 Z" fill="url(#r5c)" />
<path d="M21,14.6 L52,14.6 L52,28 L21,28 Z" fill="#d8c8a4" />
<rect x="21" y="14.6" width="31" height="2.6" fill="#f4ecc8" />
<rect x="24" y="19" width="5" height="9" fill="#8a5a34" />
<rect x="30" y="19.6" width="7" height="7" fill="#e8d8b0" />
<rect x="38.4" y="19" width="6" height="9" fill="#a89a8a" />
<rect x="45.6" y="18" width="3" height="10" fill="#e8e0d0" />
<path d="M3.4,5 L21,14.6 L21,28 L3.4,37 Z" fill="#c0ac90" />
<path d="M5,9 L19,16 L19,20 L5,15 Z" fill="#7a5c3c" />
<path d="M5,17 L12,19.4 L12,26 L5,27 Z" fill="#c8b498" />
<path d="M9.6,21.6 L13.6,22.4 L13.6,27.4 L9.6,27.8 Z" fill="#2a2a30" />
<path d="M0,0 L3.4,3 L3.4,37 L0,40 Z" fill="#e4e0dc" />
<path d="M0,41.8 L3.4,37 L21,28 L52,28 L60.2,33 L60.2,41.8 Z" fill="url(#r5f)" />
<path d="M5,36 L20,29.4 L22,30.6 L8,38.4 Z" fill="#f0ece4" />
<path d="M52,14.6 L60.2,6 L60.2,33 L52,28 Z" fill="#e8e4dc" />
<path d="M54,12 L57.4,9 L57.4,27 L54,26 Z" fill="#f8f8f8" />
<path d="M30,29.4 L36,26.6 L52,26.6 L57,28 L59,38 L44,38 L42,34 L30,33 Z" fill="#a8887c" />
<path d="M30,29.4 L36,26.6 L52,26.6 L52,29 L36,29.6 L32,31 Z" fill="#c4a89c" />
<path d="M44,33 L58,31 L59,38 L44,38 Z" fill="#8c6c60" />
<path d="M21,34 L34,33 L37,37.4 L23,38.6 Z" fill="#b4b8c0" opacity="0.9"/>
<path d="M14,38 L40,36 L44,41.8 L10,41.8 Z" fill="#d0d0d4" opacity="0.7"/>
</g>
<g transform="translate(685.6 218.9)" clip-path="url(#tRc)">
<rect x="0" y="0" width="60.2" height="41.8" fill="#ffffff" />
<ellipse cx="31" cy="38.6" rx="9" ry="1.4" fill="#d8d8d8" filter="url(#bh)"/>
<path d="M24.6,4 L36.4,2.6 L36.8,36.4 L25.4,38.4 Z" fill="#c8a468" />
<path d="M26,5.4 L35.4,4.2 L35.6,35.6 L26.6,37 Z" fill="#15130f" />
<path d="M28.6,6.6 L33.4,6 L33.4,11.6 L28.8,12 Z" fill="#a83a2c" />
<path d="M27.6,19.6 L34.2,19 L34.2,23.2 L27.8,23.8 Z" fill="#ecece8" />
<path d="M22.4,38.2 L25.4,37.6 L36.8,35.8 L39.6,36.6 L26,39.8 Z" fill="#c8a468" />
</g>
<g transform="translate(551.5 280)" clip-path="url(#tRc)">
<rect x="0" y="0" width="60.2" height="41.8" fill="url(#r7bg)" />
<rect x="0" y="0" width="60.2" height="41.8" fill="url(#r7bgh)" />
<ellipse cx="33" cy="39.6" rx="12" ry="2" fill="#8a9094" opacity="0.6" filter="url(#b1)"/>
<path d="M25,18 L33.4,22.4 L40.4,18.4 L40,35 L33.6,40.8 L24.2,37.4 Z" fill="#e2ded2" />
<path d="M25,18 L33.4,22.4 L33.6,40.8 L24.2,37.4 Z" fill="#d0cab8" />
<path d="M33.4,22.4 L40.4,18.4 L40,35 L33.6,40.8 Z" fill="#ecebe4" />
<line x1="24.8" y1="22" x2="33.5" y2="26" stroke="#b0aa96" stroke-width="0.4"/>
<line x1="24.8" y1="26" x2="33.5" y2="30" stroke="#b0aa96" stroke-width="0.4"/>
<line x1="24.8" y1="30" x2="33.5" y2="34" stroke="#b0aa96" stroke-width="0.4"/>
<line x1="24.8" y1="34" x2="33.5" y2="38" stroke="#b0aa96" stroke-width="0.4"/>
<path d="M13.2,8.3 L32.7,3.2 L46.8,12.4 L33.2,20.2 Z" fill="#f6f6f6" />
<path d="M13.2,8.3 L33.2,20.2 L46.8,12.4 L46.8,15 L33.2,23 L13,10.6 Z" fill="#d2d4d6" />
<path d="M19,8.6 L32.7,5.4 L43.4,12.2 L33.6,17.8 Z" fill="#8088a0" />
<ellipse cx="34.5" cy="10.4" rx="4.4" ry="3.2" fill="#6a4a9a" />
<ellipse cx="35.6" cy="10.2" rx="2.4" ry="1.8" fill="#e4dc40" />
<ellipse cx="32.6" cy="11.2" rx="1.5" ry="1.1" fill="#3aa848" />
<ellipse cx="31" cy="9" rx="3" ry="1.6" fill="#c8c8e8" opacity="0.6"/>
</g>
<g transform="translate(618.6 280)" clip-path="url(#tRc)">
<rect x="0" y="0" width="60.2" height="41.8" fill="#ffffff" />
<ellipse cx="29.6" cy="38.8" rx="8.4" ry="1.5" fill="#d4d4d4" filter="url(#bh)"/>
<path d="M23.4,3.6 L33.4,2 L34.4,35.4 L25,36.8 Z" fill="#d8d8dc" />
<path d="M24,4.2 L32.8,2.8 L33.8,34.8 L25.4,36 Z" fill="#17161a" />
<path d="M25.2,6 L32,5 L32.4,12.6 L25.6,13.4 Z" fill="#b8482c" />
<path d="M25.6,8 L28.4,7.6 L28.6,12.9 L25.7,13.3 Z" fill="#e8d8c8" />
<path d="M25.7,14.4 L32.4,13.6 L32.6,17 L25.8,17.8 Z" fill="#e8e4e0" />
<path d="M25.9,18.8 L32.7,18 L33,25 L26.2,25.8 Z" fill="#b02c20" />
<path d="M27,20.4 L30.4,20 L30.6,23.6 L27.2,24 Z" fill="#e87858" />
<path d="M22,36.6 L25,35.6 L34.4,34.4 L38,35.4 L36.8,37.6 L24,39.2 Z" fill="#e0e0e4" />
<path d="M22,36.6 L24,39.2 L36.8,37.6 L38,35.4 L38,36.6 L36.8,38.8 L24,40.2 Z" fill="#a8a8ae" />
</g>
<g transform="translate(685.6 280)" clip-path="url(#tRc)">
<rect x="0" y="0" width="60.2" height="41.8" fill="#120c08" />
<rect x="2" y="2" width="56.2" height="37.4" fill="#4a2c14" />
<rect x="2" y="2" width="56.2" height="4" fill="#3a2210" />
<rect x="30" y="3" width="26" height="1.4" fill="#8a6a44" opacity="0.7"/>
<rect x="4.4" y="7" width="51.4" height="25.6" fill="#c4c8bc" />
<path d="M4.4,7 L12,7 L13,14 L10,22 L11,30 L4.4,32.6 Z" fill="#3a4630" />
<path d="M5,8 L7,8 L8,32 L6,32 Z" fill="#5a4434" />
<path d="M44,7 L55.8,7 L55.8,32.6 L48,30 L50,20 L46,12 Z" fill="#46523a" />
<path d="M51,9 L52.4,9 L53,31 L51.6,31 Z" fill="#4a382c" />
<path d="M4.4,27 L55.8,26 L55.8,32.6 L4.4,32.6 Z" fill="#7a8a5c" />
<path d="M14,16 L24,13 L30,15 L30,12 L34,11 L40,13 L40,17 L46,18 L46,28 L14,29 Z" fill="#c8c8c0" />
<path d="M14,16 L24,13 L30,15 L28,18 L14,19.6 Z" fill="#8a8a84" />
<path d="M30,12 L34,11 L40,13 L40,16 L30,16 Z" fill="#6a6c68" />
<rect x="35.6" y="9.6" width="3" height="7" fill="#8a8880" />
<path d="M16,21.6 L27,21 L27,28.4 L16,28.8 Z" fill="#9a9890" />
<path d="M30,19 L39,19 L39,28 L30,28 Z" fill="#eeeee8" />
<path d="M40,20 L45,20.6 L45,27.6 L40,27.6 Z" fill="#7a7468" />
<rect x="17" y="22" width="1.5" height="6" fill="#5a5a54" />
<rect x="19.6" y="22" width="1.5" height="6" fill="#5a5a54" />
<rect x="22.2" y="22" width="1.5" height="6" fill="#5a5a54" />
<rect x="24.8" y="22" width="1.5" height="6" fill="#5a5a54" />
<rect x="2" y="32.6" width="56.2" height="6.8" fill="#5a3418" />
<rect x="4" y="34.4" width="52" height="2.6" fill="#7a4c24" />
<rect x="5.0" y="35" width="4.4" height="1.4" fill="#4a2a12" />
<rect x="11.4" y="35" width="4.4" height="1.4" fill="#4a2a12" />
<rect x="17.8" y="35" width="4.4" height="1.4" fill="#4a2a12" />
<rect x="24.200000000000003" y="35" width="4.4" height="1.4" fill="#4a2a12" />
<rect x="30.6" y="35" width="4.4" height="1.4" fill="#4a2a12" />
<rect x="37.0" y="35" width="4.4" height="1.4" fill="#4a2a12" />
<rect x="43.400000000000006" y="35" width="4.4" height="1.4" fill="#4a2a12" />
<rect x="49.800000000000004" y="35" width="4.4" height="1.4" fill="#4a2a12" />
</g>
<g transform="translate(551.5 341.3)" clip-path="url(#tRc)">
<rect x="0" y="0" width="60.2" height="41.8" fill="#ffffff" />
<ellipse cx="31" cy="40.4" rx="15" ry="1.4" fill="#d8d8d8" filter="url(#bh)"/>
<path d="M20.6,17.5 L41,16.4 L41,39.6 L20.6,39.6 Z" fill="#1e2519" />
<path d="M20.6,17.5 L23.8,17.3 L23.8,39.6 L20.6,39.6 Z" fill="#3a3a2a" />
<path d="M23.8,17.3 L25.6,17.2 L25.6,39.6 L23.8,39.6 Z" fill="#8a6a2c" />
<path d="M38.4,16.6 L41,16.4 L41,39.6 L38.4,39.6 Z" fill="#10140e" />
<path d="M17,39 L44.7,39 L43.8,41.8 L18,41.8 Z" fill="#b08836" />
<path d="M12.4,4.4 L40.1,6.2 L49.7,15.3 L20.6,18 Z" fill="#be943e" />
<path d="M12.4,4.4 L20.6,18 L20.8,20.4 L12.2,6.6 Z" fill="#86662a" />
<path d="M20.6,18 L49.7,15.3 L49.7,17.6 L20.8,20.4 Z" fill="#9c7830" />
<path d="M16.5,5.4 L39.6,7.2 L46.2,13 L21.4,14.8 Z" fill="url(#r10s)" />
<path d="M24,8 L34,8.6 L36,10 L26,9.6 Z" fill="#ffffff" opacity="0.6"/>
</g>
<g transform="translate(618.6 341.3)" clip-path="url(#tRc)">
<rect x="0" y="0" width="60.2" height="41.8" fill="#ffffff" />
<rect x="6" y="6.4" width="49.4" height="30" fill="#0e0e10" />
<rect x="7.4" y="7.8" width="46.6" height="27" fill="url(#r11s)" />
<path d="M34,23 L8,12 L8,18 Z M34,23 L20,8 L28,8 Z M34,23 L46,8 L52,8 Z M34,23 L54,16 L54,22 Z" fill="#e8a0e0" opacity="0.35"/>
<path d="M7.4,27 C20,24 40,30 54,26 L54,34.8 L7.4,34.8 Z" fill="#140a24" opacity="0.9"/>
<ellipse cx="36.4" cy="20.4" rx="3" ry="2.8" fill="#d8281c" />
<ellipse cx="32" cy="22.6" rx="2.4" ry="2.2" fill="#c02018" />
<ellipse cx="34.6" cy="23.6" rx="1.6" ry="1.4" fill="#f0f0f0" />
</g>
<g transform="translate(685.6 341.3)" clip-path="url(#tRc)">
<rect x="0" y="0" width="60.2" height="41.8" fill="#ffffff" />
<path d="M20,15 L31,19 L32,30 L30,41.8 L20.6,41.8 Z" fill="url(#r12p)" />
<path d="M31,19 L40,24 C38,30 40,34 44,36 L40,40 L30,41.8 L32,30 Z" fill="#f2f0ee" />
<path d="M33,28 L39,29 M33,32 L40,33.4 M33,36 L42,37" fill="none" stroke="#d0ccc8" stroke-width="0.5"/>
<path d="M8.6,6.6 L13,4.4 L36,3.6 L52.6,15.4 L50,18.6 L36.6,25.6 Z" fill="#cfcfd2" />
<path d="M8.6,6.6 L36.6,25.6 L36.2,27.6 L8.4,8.6 Z" fill="#b09074" />
<path d="M17,5.6 L35,4.6 L49,15.4 L38.6,22.6 Z" fill="url(#r12s)" />
<path d="M36.6,25.6 L50,18.6 L52.6,15.4 L52.6,17 L50,20.4 L36.2,27.6 Z" fill="#9a9aa0" />
<ellipse cx="31" cy="11.6" rx="1.6" ry="1.8" fill="#e8a868" />
<ellipse cx="34.4" cy="11" rx="1.4" ry="1.8" fill="#f0c8a0" />
<ellipse cx="28.4" cy="13" rx="1.2" ry="1.4" fill="#c87848" />
</g>
<rect x="547" y="152" width="204.6" height="62.6" fill="none" stroke="#e6262a" stroke-width="1.15"/>
<text transform="translate(609.3 412.9) scale(0.25 0.25)" font-size="13.6" fill="#444" font-weight="400" font-family='"Liberation Sans","Noto Sans CJK SC",sans-serif' text-anchor="start" >共2页 目前1页</text>
<text transform="translate(632.5 412.9) scale(0.25 0.25)" font-size="13.6" fill="#222" font-weight="700" font-family='"Liberation Sans","Noto Sans CJK SC",sans-serif' text-anchor="start" >首 页</text>
<text transform="translate(646 412.9) scale(0.25 0.25)" font-size="13.6" fill="#444" font-weight="400" font-family='"Liberation Sans","Noto Sans CJK SC",sans-serif' text-anchor="start" >上一页</text>
<text transform="translate(662.5 412.9) scale(0.25 0.25)" font-size="13.6" fill="#444" font-weight="400" font-family='"Liberation Sans","Noto Sans CJK SC",sans-serif' text-anchor="start" >下一页</text>
<text transform="translate(679.3 412.9) scale(0.25 0.25)" font-size="13.6" fill="#222" font-weight="700" font-family='"Liberation Sans","Noto Sans CJK SC",sans-serif' text-anchor="start" >尾 页</text>
<text transform="translate(609.3 441.4) scale(0.25 0.25)" font-size="13.6" fill="#444" font-weight="400" font-family='"Liberation Sans","Noto Sans CJK SC",sans-serif' text-anchor="start" >共2页 目前1页</text>
<text transform="translate(632.5 441.4) scale(0.25 0.25)" font-size="13.6" fill="#222" font-weight="700" font-family='"Liberation Sans","Noto Sans CJK SC",sans-serif' text-anchor="start" >首 页</text>
<text transform="translate(646 441.4) scale(0.25 0.25)" font-size="13.6" fill="#444" font-weight="400" font-family='"Liberation Sans","Noto Sans CJK SC",sans-serif' text-anchor="start" >上一页</text>
<text transform="translate(662.5 441.4) scale(0.25 0.25)" font-size="13.6" fill="#444" font-weight="400" font-family='"Liberation Sans","Noto Sans CJK SC",sans-serif' text-anchor="start" >下一页</text>
<text transform="translate(679.3 441.4) scale(0.25 0.25)" font-size="13.6" fill="#222" font-weight="700" font-family='"Liberation Sans","Noto Sans CJK SC",sans-serif' text-anchor="start" >尾 页</text>
<rect x="415" y="505" width="385" height="38.2" fill="#202025" />
<rect x="415" y="505" width="385" height="1.3" fill="#98161a" />
<rect x="415" y="543" width="385" height="6" fill="#020202" />
<rect x="415" y="548.9" width="385" height="1.1" fill="#ffffff" />
<rect x="415" y="548.9" width="2.6" height="1.1" fill="#020202" />
<g transform="translate(510.6 517.6) scale(1.0)" fill="none" stroke="#ffffff" stroke-width="1.25" stroke-linecap="round">
<path d="M0.5,0.8 L8.6,0.8 L4.2,6.4 C8.6,5.6 10.4,9 9.2,12 C7.8,15.4 3,15.6 0.6,13"/>
<circle cx="12.2" cy="11.2" r="3.9"/><path d="M15.6,1 C10.6,3.6 8.2,7.6 8.4,11.6"/>
<circle cx="19.6" cy="11.2" r="3.9"/>
</g>
<g transform="translate(510.6 517.6) scale(1.0)"><path d="M23,3.5 L25.5,3.2 L29,7 L33,7.4 L35.4,10.2 L34,13 L30,12.6 L26.6,9.6 L27.6,8.6 Z" fill="#ffffff"/><circle cx="24" cy="4.2" r="1.6" fill="none" stroke="#ffffff" stroke-width="0.6"/><rect x="33.4" y="10.6" width="2" height="2.6" fill="#ffffff"/></g>
<text transform="translate(560 517.5) scale(0.25 0.25)" font-size="13.6" fill="#e4e4e4" font-weight="700" font-family='"Liberation Sans","Noto Sans CJK SC",sans-serif' text-anchor="middle" >首页</text>
<text transform="translate(579.8 517.5) scale(0.25 0.25)" font-size="13.6" fill="#e4e4e4" font-weight="700" font-family='"Liberation Sans","Noto Sans CJK SC",sans-serif' text-anchor="middle" >关于我们</text>
<text transform="translate(603.3 517.5) scale(0.25 0.25)" font-size="13.6" fill="#e4e4e4" font-weight="700" font-family='"Liberation Sans","Noto Sans CJK SC",sans-serif' text-anchor="middle" >信息动态</text>
<text transform="translate(626.7 517.5) scale(0.25 0.25)" font-size="13.6" fill="#e4e4e4" font-weight="700" font-family='"Liberation Sans","Noto Sans CJK SC",sans-serif' text-anchor="middle" >业务分布</text>
<text transform="translate(650 517.5) scale(0.25 0.25)" font-size="13.6" fill="#e4e4e4" font-weight="700" font-family='"Liberation Sans","Noto Sans CJK SC",sans-serif' text-anchor="middle" >解决方案</text>
<text transform="translate(673.2 517.5) scale(0.25 0.25)" font-size="13.6" fill="#e4e4e4" font-weight="700" font-family='"Liberation Sans","Noto Sans CJK SC",sans-serif' text-anchor="middle" >案例应用</text>
<text transform="translate(696.6 517.5) scale(0.25 0.25)" font-size="13.6" fill="#e4e4e4" font-weight="700" font-family='"Liberation Sans","Noto Sans CJK SC",sans-serif' text-anchor="middle" >联系我们</text>
<rect x="568.6" y="513.8" width="0.4" height="4.5" fill="#55565a" />
<rect x="591.5" y="513.8" width="0.4" height="4.5" fill="#55565a" />
<rect x="615" y="513.8" width="0.4" height="4.5" fill="#55565a" />
<rect x="638.4" y="513.8" width="0.4" height="4.5" fill="#55565a" />
<rect x="661.6" y="513.8" width="0.4" height="4.5" fill="#55565a" />
<rect x="685" y="513.8" width="0.4" height="4.5" fill="#55565a" />
<text transform="translate(557 522.7) scale(0.25 0.25)" font-size="13.0" fill="#727278" font-weight="400" font-family='"Liberation Sans","Noto Sans CJK SC",sans-serif' text-anchor="start" >地址：深圳市龙岗区龙翔银行6楼3号电商园C1栋四门二层  服务电话：0755-33154188  0755-33154189</text>
<text transform="translate(557 528.3) scale(0.25 0.25)" font-size="13.0" fill="#727278" font-weight="400" font-family='"Liberation Sans","Noto Sans CJK SC",sans-serif' text-anchor="start" >版权所有@2009-2013  Copyright 2011-2015 ALL Rights Reserved 粤ICP备05108号</text>
</svg>
</body></html>
